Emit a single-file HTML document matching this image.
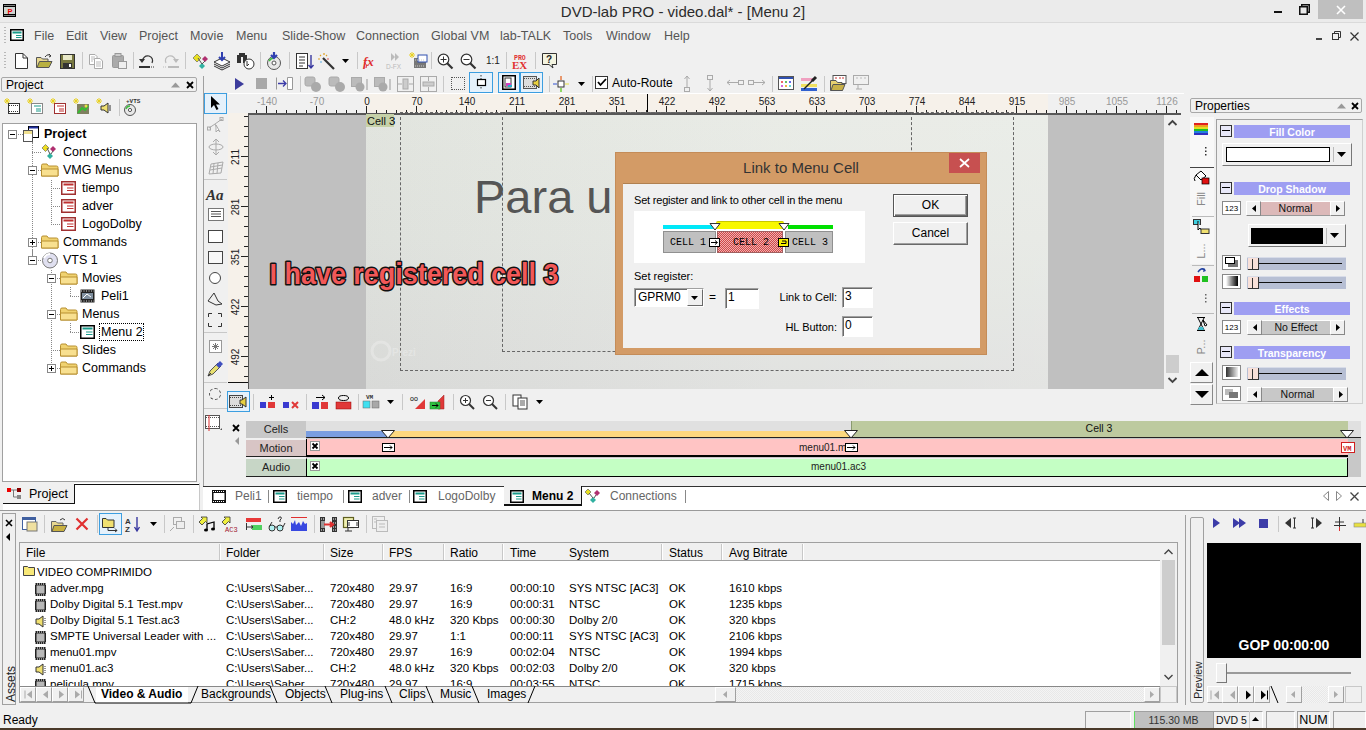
<!DOCTYPE html><html><head><meta charset="utf-8"><style>
*{margin:0;padding:0;box-sizing:border-box}
html,body{width:1366px;height:730px;overflow:hidden;background:#f0f0f0;font-family:"Liberation Sans",sans-serif;position:relative}
div{position:absolute}
.t{position:absolute;white-space:nowrap;line-height:1.15}
svg{position:absolute;overflow:visible}
</style></head><body>
<div style="position:absolute;left:0px;top:0px;width:1366px;height:22px;background:#ebebeb"></div>
<div style="position:absolute;left:0px;top:22px;width:1366px;height:1px;background:#dadada"></div>
<div class="t" style="left:432px;top:3px;font-size:15px;color:#2b2b2b;width:502px;text-align:center">DVD-lab PRO - video.dal* - [Menu 2]</div>
<svg style="left:3px;top:4px" width="13" height="13"><rect x="0" y="0" width="13" height="13" fill="#000"/><path d="M1.5 1.5H12M1.5 11.5H12" stroke="#fff" stroke-width="1" stroke-dasharray="1 1"/><rect x="1" y="3" width="11" height="7" fill="#d0d4d0"/><text x="4.5" y="9.5" font-size="7.5" font-family="Liberation Sans" font-weight="bold" fill="#e00">P</text></svg>
<div style="position:absolute;left:1274px;top:11px;width:8px;height:2px;background:#111"></div>
<svg style="left:1299px;top:4px" width="11" height="11"><rect x="0.75" y="2.75" width="7.5" height="7.5" fill="none" stroke="#111" stroke-width="1.5"/><path d="M2.75 2.5V0.75H10.25V8.25H8.5" fill="none" stroke="#111" stroke-width="1.5"/></svg>
<div style="position:absolute;left:1318px;top:0px;width:45px;height:19px;background:#bfbfbf"></div>
<svg style="left:1336px;top:5px" width="10" height="10"><path d="M1 1L9 9M9 1L1 9" stroke="#fff" stroke-width="1.6"/></svg>
<div style="position:absolute;left:0px;top:23px;width:1366px;height:25px;background:#f0f0f0"></div>
<div style="position:absolute;left:4px;top:27px;width:2px;height:16px;background:repeating-linear-gradient(#b8b8b8 0 1px,transparent 1px 3px)"></div>
<svg style="left:10px;top:29px" width="14" height="12"><rect x="0.75" y="0.75" width="12.5" height="10.5" fill="#fff" stroke="#000" stroke-width="1.5"/><rect x="2.5" y="2.5" width="9" height="2" fill="#1a9a8a"/><rect x="6" y="6" width="5.5" height="1" fill="#1a9a8a"/><rect x="6" y="8" width="5.5" height="1" fill="#1a9a8a"/></svg>
<div class="t" style="left:34px;top:29px;font-size:12.5px;color:#555;">File</div>
<div class="t" style="left:66px;top:29px;font-size:12.5px;color:#555;">Edit</div>
<div class="t" style="left:100px;top:29px;font-size:12.5px;color:#555;">View</div>
<div class="t" style="left:139px;top:29px;font-size:12.5px;color:#555;">Project</div>
<div class="t" style="left:190px;top:29px;font-size:12.5px;color:#555;">Movie</div>
<div class="t" style="left:236px;top:29px;font-size:12.5px;color:#555;">Menu</div>
<div class="t" style="left:282px;top:29px;font-size:12.5px;color:#555;">Slide-Show</div>
<div class="t" style="left:356px;top:29px;font-size:12.5px;color:#555;">Connection</div>
<div class="t" style="left:431px;top:29px;font-size:12.5px;color:#555;">Global VM</div>
<div class="t" style="left:500px;top:29px;font-size:12.5px;color:#555;">lab-TALK</div>
<div class="t" style="left:563px;top:29px;font-size:12.5px;color:#555;">Tools</div>
<div class="t" style="left:606px;top:29px;font-size:12.5px;color:#555;">Window</div>
<div class="t" style="left:664px;top:29px;font-size:12.5px;color:#555;">Help</div>
<div style="position:absolute;left:1316px;top:38px;width:6px;height:2px;background:#444"></div>
<svg style="left:1332px;top:31px" width="10" height="10"><rect x="0.5" y="2.5" width="6" height="6" fill="none" stroke="#333"/><path d="M2.5 2.5V0.5H8.5V6.5H6.5" fill="none" stroke="#333"/></svg>
<svg style="left:1350px;top:32px" width="9" height="9"><path d="M0.5 0.5L8.5 8.5M8.5 0.5L0.5 8.5" stroke="#333" stroke-width="1.2"/></svg>
<div style="position:absolute;left:4px;top:52px;width:2px;height:17px;background:repeating-linear-gradient(#b8b8b8 0 1px,transparent 1px 3px)"></div>
<div style="position:absolute;left:1px;top:77px;width:196px;height:15px;border:1px solid #a8a8a8;border-radius:2px;background:#f0f0f0"></div>
<div class="t" style="left:6px;top:79px;font-size:12px;color:#000;">Project</div>
<svg style="left:171px;top:82px" width="9" height="6"><path d="M0 5.5L4.5 0.5L9 5.5Z" fill="#999"/></svg>
<svg style="left:186px;top:81px" width="8" height="8"><path d="M1 1L7 7M7 1L1 7" stroke="#000" stroke-width="1.8"/></svg>
<div style="position:absolute;left:2px;top:123px;width:195px;height:359px;background:#fff;border:1px solid #a0a0a0"></div>
<div style="position:absolute;left:82px;top:52px;width:1px;height:17px;background:#c8c8c8"></div>
<div style="position:absolute;left:133px;top:52px;width:1px;height:17px;background:#c8c8c8"></div>
<div style="position:absolute;left:185px;top:52px;width:1px;height:17px;background:#c8c8c8"></div>
<div style="position:absolute;left:260px;top:52px;width:1px;height:17px;background:#c8c8c8"></div>
<div style="position:absolute;left:289px;top:52px;width:1px;height:17px;background:#c8c8c8"></div>
<div style="position:absolute;left:357px;top:52px;width:1px;height:17px;background:#c8c8c8"></div>
<div style="position:absolute;left:431px;top:52px;width:1px;height:17px;background:#c8c8c8"></div>
<div style="position:absolute;left:506px;top:52px;width:1px;height:17px;background:#c8c8c8"></div>
<div style="position:absolute;left:535px;top:52px;width:1px;height:17px;background:#c8c8c8"></div>
<svg style="left:15px;top:53px" width="13" height="16"><path d="M0.5 0.5H8L12.5 5V15.5H0.5Z" fill="#fff" stroke="#333"/><path d="M8 0.5V5H12.5" fill="none" stroke="#333"/></svg>
<svg style="left:36px;top:53px" width="17" height="15"><path d="M0.5 4.5H5L6.5 6H12V14.5H0.5Z" fill="#e8d890" stroke="#555"/><path d="M1 14.5L3.5 8.5H16L13 14.5Z" fill="#b8b040" stroke="#555"/><path d="M9 4Q12 0 15 3M13 1L15 3L13 4" stroke="#333" fill="none"/></svg>
<svg style="left:60px;top:54px" width="15" height="15"><rect x="0.5" y="0.5" width="14" height="14" fill="#787840" stroke="#333"/><rect x="3" y="1" width="9" height="5" fill="#e8e8c8"/><rect x="3" y="9" width="9" height="5" fill="#333"/><rect x="9" y="10" width="2" height="3" fill="#fff"/></svg>
<svg style="left:89px;top:54px" width="15" height="15"><path d="M0.5 0.5H6L8 2.5V10.5H0.5Z" fill="#fff" stroke="#aaa"/><path d="M5.5 4.5H11L13.5 7V14.5H5.5Z" fill="#fff" stroke="#aaa"/><path d="M7 8H12M7 10H12M7 12H12M2 3H6M2 5H6M2 7H4" stroke="#bbb"/></svg>
<svg style="left:112px;top:53px" width="15" height="16"><rect x="0.5" y="2.5" width="11" height="12" rx="1" fill="#aaa" stroke="#999"/><rect x="3" y="0.5" width="6" height="3" fill="#ccc" stroke="#999"/><rect x="6.5" y="8.5" width="8" height="7" fill="#eee" stroke="#999"/></svg>
<svg style="left:139px;top:54px" width="16" height="14"><path d="M3 7Q5 1 10 2Q15 4 13 9" stroke="#333" stroke-width="1.2" fill="none"/><path d="M0 5L3 9L6 5Z" fill="#333"/><rect x="0" y="12" width="11" height="2" fill="#333"/><path d="M12 13H16" stroke="#333" stroke-dasharray="1 1"/></svg>
<svg style="left:163px;top:54px" width="16" height="14"><path d="M13 7Q11 1 6 2Q1 4 3 9" stroke="#bbb" stroke-width="1.2" fill="none"/><path d="M16 5L13 9L10 5Z" fill="#bbb"/><rect x="5" y="12" width="11" height="2" fill="#bbb"/><path d="M0 13H4" stroke="#bbb" stroke-dasharray="1 1"/></svg>
<svg style="left:193px;top:53px" width="17" height="17"><path d="M0 5L4 1L8 5L4 9Z" fill="#e8e020" stroke="#555" stroke-width="0.6"/><path d="M9 6L12 3L15 6L12 9Z" fill="#b03070"/><path d="M6 13L9 10L12 13L9 16Z" fill="#30b0a0"/><path d="M5 5L9 11M12 8L9 11" stroke="#555"/></svg>
<svg style="left:213px;top:52px" width="19" height="18"><path d="M1 10L9 6L17 10L9 14Z" fill="#fff" stroke="#333"/><path d="M1 12L9 16L17 12M1 14L9 18L17 14" stroke="#333" fill="none"/><path d="M9 0V8M6 5L9 8L12 5" stroke="#3040b0" stroke-width="2" fill="none"/></svg>
<svg style="left:237px;top:53px" width="18" height="17"><rect x="0" y="2" width="4" height="8" fill="#333"/><rect x="6" y="2" width="4" height="8" fill="#333"/><rect x="2" y="0" width="6" height="4" fill="#333"/><circle cx="12" cy="11" r="5" fill="#fff" stroke="#333"/><path d="M10 8V13L12 11" stroke="#333" fill="none"/></svg>
<svg style="left:265px;top:52px" width="18" height="18"><circle cx="9" cy="11" r="6.5" fill="#e8e8e8" stroke="#555"/><circle cx="9" cy="11" r="2" fill="#fff" stroke="#555"/><path d="M4 9Q6 6 9 6" stroke="#40c040" stroke-width="1.5" fill="none"/><path d="M9 0V6M6 3L9 6L12 3" stroke="#3040b0" stroke-width="2.2" fill="none"/></svg>
<svg style="left:296px;top:53px" width="18" height="17"><rect x="0.5" y="0.5" width="11" height="15" fill="#fff" stroke="#333"/><path d="M3 4H9M3 7H9M3 10H9M3 13H7" stroke="#333"/><path d="M15 2V15M12.5 12L15 15L17.5 12" stroke="#3838a0" stroke-width="1.4" fill="none"/></svg>
<svg style="left:318px;top:53px" width="18" height="17"><path d="M5 5L16 16" stroke="#333" stroke-width="2.2"/><path d="M2 2L3 3M6 0V2M0 6H2M9 2L8 3" stroke="#e0a020" stroke-width="1.2"/><circle cx="3" cy="9" r="0.8" fill="#40a0e0"/><circle cx="10" cy="6" r="0.8" fill="#e04040"/></svg>
<svg style="left:342px;top:59px" width="7" height="4"><path d="M0 0H7L3.5 4Z" fill="#000"/></svg>
<svg style="left:363px;top:53px" width="17" height="16"><text x="0" y="13" font-size="13" font-family="Liberation Serif" font-style="italic" font-weight="bold" fill="#e03030">fx</text><path d="M1 9Q5 12 3 15" stroke="#e03030" fill="none"/></svg>
<svg style="left:385px;top:52px" width="20" height="18"><path d="M6 1L10 5L6 9ZM10 1L14 5L10 9Z" fill="#bbb"/><text x="1" y="17" font-size="6.5" font-family="Liberation Sans" fill="#bbb">D-FX</text></svg>
<svg style="left:409px;top:52px" width="19" height="18"><path d="M3 0V6M0 3H6M1 1L5 5M5 1L1 5" stroke="#e8d020"/><rect x="5" y="6" width="12" height="10" fill="#777"/><rect x="9" y="3" width="9" height="7" fill="#fff" stroke="#3050b0"/><path d="M6 8H16M6 14H16" stroke="#ccc" stroke-dasharray="1 1"/></svg>
<svg style="left:437px;top:53px" width="17" height="17"><circle cx="6.5" cy="6.5" r="5.3" fill="#fff" stroke="#333" stroke-width="1.2"/><path d="M10 10L15.5 15.5" stroke="#333" stroke-width="2.2"/><path d="M3.5 6.5H9.5M6.5 3.5V9.5" stroke="#333"/></svg>
<svg style="left:460px;top:53px" width="17" height="17"><circle cx="6.5" cy="6.5" r="5.3" fill="#fff" stroke="#333" stroke-width="1.2"/><path d="M10 10L15.5 15.5" stroke="#333" stroke-width="2.2"/><path d="M3.5 6.5H9.5" stroke="#333"/></svg>
<div class="t" style="left:486px;top:55px;font-size:10px;color:#222;">1:1</div>
<svg style="left:512px;top:53px" width="18" height="17"><text x="2" y="7" font-size="6.5" font-family="Liberation Mono" font-weight="bold" fill="#e03030">PRO</text><text x="0" y="16" font-size="11" font-family="Liberation Serif" font-weight="bold" fill="#e03030">EX</text></svg>
<svg style="left:542px;top:53px" width="16" height="17"><path d="M0.5 0.5H14.5V11.5H10L11 15L7 11.5H0.5Z" fill="#f4f4e0" stroke="#333"/><text x="4" y="10" font-size="10" font-family="Liberation Sans" font-weight="bold" fill="#222">?</text></svg>
<svg style="left:4px;top:98px" width="17" height="18"><path d="M3 0V6M0 3H6M1 1L5 5M5 1L1 5" stroke="#e8d020"/><rect x="4.5" y="5.5" width="11" height="10" fill="#fff" stroke="#333"/><path d="M5 7.5H15M5 13.5H15" stroke="#333" stroke-dasharray="1 1"/></svg>
<svg style="left:27px;top:98px" width="17" height="18"><path d="M3 0V6M0 3H6M1 1L5 5M5 1L1 5" stroke="#e8d020"/><rect x="4.5" y="5.5" width="11" height="10" fill="#fff" stroke="#888"/><path d="M7 8H14M9 11H14M9 13H14" stroke="#1a9a8a"/></svg>
<svg style="left:50px;top:98px" width="17" height="18"><path d="M3 0V6M0 3H6M1 1L5 5M5 1L1 5" stroke="#e8d020"/><rect x="4.5" y="5.5" width="11" height="10" fill="#fff" stroke="#a03030"/><path d="M7 8H14M9 11H14M9 13H14" stroke="#c03030"/></svg>
<svg style="left:73px;top:98px" width="17" height="18"><path d="M3 0V6M0 3H6M1 1L5 5M5 1L1 5" stroke="#e8d020"/><rect x="4" y="6" width="12" height="10" fill="#808060"/><path d="M5 15L9 10L12 12L15 8" stroke="#30c030" stroke-width="2" fill="none"/><circle cx="13" cy="8" r="1.5" fill="#e8e040"/></svg>
<svg style="left:96px;top:98px" width="17" height="18"><path d="M3 0V6M0 3H6M1 1L5 5M5 1L1 5" stroke="#e8d020"/><path d="M5 8H8L12 5V15L8 12H5Z" fill="#f0e070" stroke="#333"/><path d="M14 7V13" stroke="#333"/></svg>
<div style="position:absolute;left:119px;top:99px;width:1px;height:17px;background:#c8c8c8"></div>
<svg style="left:123px;top:97px" width="20" height="20"><text x="3" y="6" font-size="6" font-family="Liberation Mono" font-weight="bold" fill="#333">+VTS</text><circle cx="7" cy="13" r="5.5" fill="#e8e8e8" stroke="#555"/><circle cx="7" cy="13" r="1.6" fill="#fff" stroke="#555"/><path d="M3 12Q4 9 7 9" stroke="#40c040" stroke-width="1.3" fill="none"/></svg>
<svg style="left:0;top:0" width="200" height="400"><path d="M32.5 143V260M51.5 180V224M51.5 270V368M32.5 250V260" stroke="#888" stroke-dasharray="1 1"/><path d="M16.5 139V134" stroke="#888" stroke-dasharray="1 1"/><path d="M16 134.5H24" stroke="#888" stroke-dasharray="1 1"/><path d="M32 152.5H42" stroke="#888" stroke-dasharray="1 1"/><path d="M36 170.5H41" stroke="#888" stroke-dasharray="1 1"/><path d="M51 188.5H61" stroke="#888" stroke-dasharray="1 1"/><path d="M51 206.5H61" stroke="#888" stroke-dasharray="1 1"/><path d="M51 224.5H61" stroke="#888" stroke-dasharray="1 1"/><path d="M36 242.5H41" stroke="#888" stroke-dasharray="1 1"/><path d="M36 260.5H41" stroke="#888" stroke-dasharray="1 1"/><path d="M55 278.5H60" stroke="#888" stroke-dasharray="1 1"/><path d="M70 296.5H80" stroke="#888" stroke-dasharray="1 1"/><path d="M55 314.5H60" stroke="#888" stroke-dasharray="1 1"/><path d="M70 332.5H80" stroke="#888" stroke-dasharray="1 1"/><path d="M51 350.5H60" stroke="#888" stroke-dasharray="1 1"/><path d="M55 368.5H60" stroke="#888" stroke-dasharray="1 1"/><path d="M32.5 134V143M70.5 287V296M70.5 323V332" stroke="#888" stroke-dasharray="1 1"/></svg>
<svg style="left:8px;top:130px" width="9" height="9"><rect x="0.5" y="0.5" width="8" height="8" fill="#fff" stroke="#888"/><path d="M2 4.5H7" stroke="#000"/></svg>
<svg style="left:23px;top:126px" width="16" height="16"><rect x="5.5" y="0.5" width="10" height="11" fill="#fff" stroke="#000"/><rect x="6" y="0.5" width="9" height="2" fill="#2030a0"/><rect x="0.5" y="4.5" width="9" height="11" fill="#fff" stroke="#555"/><rect x="1" y="5" width="8" height="3" fill="#f0e090"/></svg>
<div class="t" style="left:44px;top:127px;font-size:12.5px;color:#000;"><b>Project</b></div>
<svg style="left:42px;top:144px" width="15" height="16"><path d="M0 4L3.5 0.5L7 4L3.5 7.5Z" fill="#f0e020" stroke="#555" stroke-width="0.6"/><path d="M8 5L11 2L14 5L11 8Z" fill="#b03070"/><path d="M5 12L8 9L11 12L8 15Z" fill="#30b0a0"/><path d="M5 4L8 10M11 7L9 10" stroke="#555"/></svg>
<div class="t" style="left:63px;top:145px;font-size:12.5px;color:#000;">Connections</div>
<svg style="left:28px;top:166px" width="9" height="9"><rect x="0.5" y="0.5" width="8" height="8" fill="#fff" stroke="#888"/><path d="M2 4.5H7" stroke="#000"/></svg>
<svg style="left:41px;top:163px" width="18" height="14"><path d="M0.5 2.5Q0.5 1 2 1H6L7.5 3H15.5Q17 3 17 4.5V13H0.5Z" fill="#f0d270" stroke="#b89030"/><path d="M0.5 13V6H17V13Z" fill="#f8e090" stroke="#b89030"/></svg>
<div class="t" style="left:63px;top:163px;font-size:12.5px;color:#000;">VMG Menus</div>
<svg style="left:61px;top:181px" width="15" height="14"><rect x="0.75" y="0.75" width="13.5" height="12.5" fill="#fff" stroke="#a03030" stroke-width="1.5"/><rect x="2.5" y="2.5" width="10" height="2" fill="#c03030"/><rect x="6" y="6.5" width="6.5" height="1" fill="#c03030"/><rect x="6" y="9" width="6.5" height="1" fill="#c03030"/></svg>
<div class="t" style="left:82px;top:181px;font-size:12.5px;color:#000;">tiempo</div>
<svg style="left:61px;top:199px" width="15" height="14"><rect x="0.75" y="0.75" width="13.5" height="12.5" fill="#fff" stroke="#a03030" stroke-width="1.5"/><rect x="2.5" y="2.5" width="10" height="2" fill="#c03030"/><rect x="6" y="6.5" width="6.5" height="1" fill="#c03030"/><rect x="6" y="9" width="6.5" height="1" fill="#c03030"/></svg>
<div class="t" style="left:82px;top:199px;font-size:12.5px;color:#000;">adver</div>
<svg style="left:61px;top:217px" width="15" height="14"><rect x="0.75" y="0.75" width="13.5" height="12.5" fill="#fff" stroke="#a03030" stroke-width="1.5"/><rect x="2.5" y="2.5" width="10" height="2" fill="#c03030"/><rect x="6" y="6.5" width="6.5" height="1" fill="#c03030"/><rect x="6" y="9" width="6.5" height="1" fill="#c03030"/></svg>
<div class="t" style="left:82px;top:217px;font-size:12.5px;color:#000;">LogoDolby</div>
<svg style="left:28px;top:238px" width="9" height="9"><rect x="0.5" y="0.5" width="8" height="8" fill="#fff" stroke="#888"/><path d="M2 4.5H7M4.5 2V7" stroke="#000"/></svg>
<svg style="left:41px;top:235px" width="18" height="14"><path d="M0.5 2.5Q0.5 1 2 1H6L7.5 3H15.5Q17 3 17 4.5V13H0.5Z" fill="#f0d270" stroke="#b89030"/><path d="M0.5 13V6H17V13Z" fill="#f8e090" stroke="#b89030"/></svg>
<div class="t" style="left:63px;top:235px;font-size:12.5px;color:#000;">Commands</div>
<svg style="left:28px;top:256px" width="9" height="9"><rect x="0.5" y="0.5" width="8" height="8" fill="#fff" stroke="#888"/><path d="M2 4.5H7" stroke="#000"/></svg>
<svg style="left:41px;top:252px" width="18" height="17"><circle cx="9" cy="8.5" r="7.5" fill="#e0e0f0" stroke="#777"/><circle cx="9" cy="8.5" r="2.3" fill="#fff" stroke="#777"/><path d="M3 6Q5 2 9 2" stroke="#fff" stroke-width="2" fill="none"/></svg>
<div class="t" style="left:63px;top:253px;font-size:12.5px;color:#000;">VTS 1</div>
<svg style="left:47px;top:274px" width="9" height="9"><rect x="0.5" y="0.5" width="8" height="8" fill="#fff" stroke="#888"/><path d="M2 4.5H7" stroke="#000"/></svg>
<svg style="left:60px;top:271px" width="18" height="14"><path d="M0.5 2.5Q0.5 1 2 1H6L7.5 3H15.5Q17 3 17 4.5V13H0.5Z" fill="#f0d270" stroke="#b89030"/><path d="M0.5 13V6H17V13Z" fill="#f8e090" stroke="#b89030"/></svg>
<div class="t" style="left:82px;top:271px;font-size:12.5px;color:#000;">Movies</div>
<svg style="left:80px;top:289px" width="15" height="14"><rect x="0.5" y="0.5" width="14" height="13" fill="#222"/><path d="M1 2H14M1 12H14" stroke="#ddd" stroke-dasharray="1 1.5"/><rect x="2" y="4" width="11" height="6" fill="#8090a0"/><path d="M3 9L7 5L11 8" stroke="#fff" fill="none"/></svg>
<div class="t" style="left:101px;top:289px;font-size:12.5px;color:#000;">Peli1</div>
<svg style="left:47px;top:310px" width="9" height="9"><rect x="0.5" y="0.5" width="8" height="8" fill="#fff" stroke="#888"/><path d="M2 4.5H7" stroke="#000"/></svg>
<svg style="left:60px;top:307px" width="18" height="14"><path d="M0.5 2.5Q0.5 1 2 1H6L7.5 3H15.5Q17 3 17 4.5V13H0.5Z" fill="#f0d270" stroke="#b89030"/><path d="M0.5 13V6H17V13Z" fill="#f8e090" stroke="#b89030"/></svg>
<div class="t" style="left:82px;top:307px;font-size:12.5px;color:#000;">Menus</div>
<svg style="left:80px;top:325px" width="15" height="14"><rect x="0.75" y="0.75" width="13.5" height="12.5" fill="#fff" stroke="#000" stroke-width="1.5"/><rect x="2.5" y="2.5" width="10" height="2" fill="#1a9a8a"/><rect x="6" y="6.5" width="6.5" height="1" fill="#1a9a8a"/><rect x="6" y="9" width="6.5" height="1" fill="#1a9a8a"/></svg>
<div style="position:absolute;left:99px;top:323px;width:45px;height:18px;border:1px dotted #000"></div>
<div class="t" style="left:101px;top:325px;font-size:12.5px;color:#000;">Menu 2</div>
<svg style="left:60px;top:343px" width="18" height="14"><path d="M0.5 2.5Q0.5 1 2 1H6L7.5 3H15.5Q17 3 17 4.5V13H0.5Z" fill="#f0d270" stroke="#b89030"/><path d="M0.5 13V6H17V13Z" fill="#f8e090" stroke="#b89030"/></svg>
<div class="t" style="left:82px;top:343px;font-size:12.5px;color:#000;">Slides</div>
<svg style="left:47px;top:364px" width="9" height="9"><rect x="0.5" y="0.5" width="8" height="8" fill="#fff" stroke="#888"/><path d="M2 4.5H7M4.5 2V7" stroke="#000"/></svg>
<svg style="left:60px;top:361px" width="18" height="14"><path d="M0.5 2.5Q0.5 1 2 1H6L7.5 3H15.5Q17 3 17 4.5V13H0.5Z" fill="#f0d270" stroke="#b89030"/><path d="M0.5 13V6H17V13Z" fill="#f8e090" stroke="#b89030"/></svg>
<div class="t" style="left:82px;top:361px;font-size:12.5px;color:#000;">Commands</div>
<div style="position:absolute;left:0px;top:483px;width:200px;height:27px;background:#fff"></div>
<div style="position:absolute;left:0px;top:483px;width:3px;height:27px;background:#f0f0f0"></div>
<div style="position:absolute;left:3px;top:483px;width:71px;height:20px;background:#f0f0f0"></div>
<div style="position:absolute;left:74px;top:484px;width:125px;height:1px;background:#111"></div>
<div style="position:absolute;left:74px;top:484px;width:1px;height:20px;background:#111"></div>
<div style="position:absolute;left:3px;top:503px;width:72px;height:1px;background:#111"></div>
<div style="position:absolute;left:199px;top:483px;width:1px;height:27px;background:#c8c8c8"></div>
<svg style="left:7px;top:488px" width="15" height="12"><rect x="0" y="0" width="4" height="4" fill="#e00"/><rect x="10" y="0" width="4" height="4" fill="#800"/><rect x="10" y="7" width="4" height="4" fill="#888"/><path d="M4 2H10M6.5 2V9H10" stroke="#777" fill="none"/></svg>
<div class="t" style="left:29px;top:487px;font-size:12.5px;color:#000;">Project</div>
<div style="position:absolute;left:203px;top:76px;width:1px;height:434px;background:#a0a0a0"></div>
<div style="position:absolute;left:204px;top:93px;width:23px;height:21px;background:#e5f1fb;border:1px solid #3c9ee0"></div>
<svg style="left:210px;top:96px" width="12" height="15"><path d="M1 0L1 12L4 9L6.5 14L8.5 13L6 8.5L10 8.5Z" fill="#000"/></svg>
<svg style="left:207px;top:117px" width="18" height="16"><path d="M2 11L8 7L15 2M8 7L11 13" stroke="#aaa" fill="none"/><rect x="13" y="0.5" width="3" height="3" fill="none" stroke="#aaa"/><rect x="0.5" y="10" width="3" height="3" fill="none" stroke="#aaa"/><path d="M9 8L9 15L11 13L13 15Z" fill="#fff" stroke="#aaa"/></svg>
<svg style="left:207px;top:139px" width="18" height="16"><ellipse cx="9" cy="8" rx="7" ry="3" fill="none" stroke="#aaa"/><path d="M9 1L9 15M6 3L9 0L12 3M6 13L9 16L12 13" stroke="#aaa" fill="none"/></svg>
<svg style="left:207px;top:160px" width="18" height="16"><path d="M2 14L4 4L16 2L14 13Z M3 10L15 8M3.5 7L15.5 5M7 3.5L6 14M11 3L10 13.5" stroke="#aaa" fill="none"/></svg>
<div style="position:absolute;left:204px;top:179px;width:23px;height:1px;background:#c8c8c8"></div>
<div class="t" style="left:206px;top:187px;font-size:15px;color:#333;font-family:'Liberation Serif',serif"><i><b>Aa</b></i></div>
<svg style="left:208px;top:208px" width="16" height="13"><rect x="0.5" y="0.5" width="15" height="12" fill="#fff" stroke="#777"/><path d="M3 3.5H13M3 6H13M3 8.5H13" stroke="#555"/></svg>
<div style="position:absolute;left:208px;top:230px;width:15px;height:13px;border:1px solid #444;background:#fff"></div>
<div style="position:absolute;left:208px;top:251px;width:15px;height:13px;border:1px solid #444;background:#f8f8f8"></div>
<div style="position:absolute;left:209px;top:272px;width:12px;height:12px;border:1px solid #444;border-radius:50%;background:#fff"></div>
<svg style="left:207px;top:291px" width="16" height="15"><path d="M1 10L7 2L11 10L15 13L9 14Z" fill="none" stroke="#333"/></svg>
<svg style="left:208px;top:313px" width="14" height="14"><path d="M0.5 4V0.5H4M10 0.5H13.5V4M13.5 10V13.5H10M4 13.5H0.5V10" fill="none" stroke="#333"/></svg>
<div style="position:absolute;left:204px;top:332px;width:23px;height:1px;background:#c8c8c8"></div>
<svg style="left:209px;top:340px" width="13" height="13"><rect x="0.5" y="0.5" width="12" height="12" fill="#fff" stroke="#999"/><path d="M6.5 3V10M3 6.5H10M4 4L9 9M9 4L4 9" stroke="#777"/></svg>
<svg style="left:207px;top:360px" width="17" height="17"><path d="M1 16L3 11L11 3L14 6L6 14Z" fill="#e8e070" stroke="#555"/><path d="M9 5L13 1L16 4L12 8Z" fill="#4050c0"/><path d="M1 16L4 13" stroke="#333"/></svg>
<div style="position:absolute;left:204px;top:382px;width:23px;height:1px;background:#c8c8c8"></div>
<div style="position:absolute;left:209px;top:388px;width:12px;height:12px;border:1px dashed #555;border-radius:50%"></div>
<svg style="left:235px;top:78px" width="10" height="12"><path d="M0 0L9 6L0 12Z" fill="#3c3c9c"/></svg>
<div style="position:absolute;left:256px;top:78px;width:11px;height:11px;background:#a8a8a8"></div>
<svg style="left:276px;top:77px" width="18" height="13"><path d="M0.5 0.5V12.5" stroke="#999"/><path d="M11.5 0.5H16.5V12.5H11.5Z" fill="#fff" stroke="#999"/><path d="M2 6.5H10M7 3.5L10 6.5L7 9.5" stroke="#3c3ca8" stroke-width="1.3" fill="none"/></svg>
<div style="position:absolute;left:300px;top:76px;width:1px;height:16px;background:#c8c8c8"></div>
<svg style="left:304px;top:76px" width="18" height="16"><rect x="1" y="1" width="10" height="9" rx="2" fill="#bbb" stroke="#aaa"/><circle cx="12" cy="11" r="5" fill="#aaa"/></svg>
<svg style="left:328px;top:76px" width="18" height="16"><rect x="1" y="1" width="10" height="9" rx="2" fill="#bbb" stroke="#aaa"/><circle cx="12" cy="11" r="5" fill="#aaa"/></svg>
<svg style="left:351px;top:76px" width="18" height="16"><rect x="0.5" y="1.5" width="10" height="9" fill="#bbb" stroke="#aaa"/><circle cx="9" cy="11" r="4.5" fill="#aaa"/><path d="M16 3V14" stroke="#999"/></svg>
<svg style="left:374px;top:76px" width="18" height="16"><rect x="0.5" y="1.5" width="10" height="9" fill="#bbb" stroke="#aaa"/><circle cx="9" cy="11" r="4.5" fill="#aaa"/><path d="M16 3V14" stroke="#999"/></svg>
<svg style="left:397px;top:76px" width="18" height="16"><rect x="0.5" y="0.5" width="16" height="15" fill="none" stroke="#aaa"/><rect x="6" y="3" width="5" height="10" fill="#ccc" stroke="#aaa"/><path d="M1 8H5M12 8H16" stroke="#aaa"/></svg>
<svg style="left:420px;top:76px" width="18" height="16"><rect x="0.5" y="0.5" width="16" height="15" fill="none" stroke="#aaa"/><rect x="3" y="6" width="11" height="4" fill="#ccc" stroke="#aaa"/><path d="M8.5 1V5M8.5 11V15" stroke="#aaa"/></svg>
<div style="position:absolute;left:443px;top:76px;width:1px;height:16px;background:#c8c8c8"></div>
<div style="position:absolute;left:451px;top:77px;width:14px;height:13px;border:1px dotted #555"></div>
<div style="position:absolute;left:469px;top:72px;width:24px;height:21px;background:#e5f1fb;border:1px solid #3c9ee0"></div>
<svg style="left:474px;top:75px" width="14" height="15"><path d="M7 0V15" stroke="#333" stroke-dasharray="1.5 1.5"/><rect x="3.5" y="4.5" width="8" height="6" fill="#fff" stroke="#000" stroke-width="1.2"/></svg>
<div style="position:absolute;left:498px;top:72px;width:22px;height:21px;background:#e5f1fb;border:1px solid #3c9ee0"></div>
<svg style="left:502px;top:75px" width="14" height="15"><rect x="0.75" y="0.75" width="12.5" height="13.5" fill="#fff" stroke="#000" stroke-width="1.5"/><rect x="3" y="3" width="6" height="9" fill="none" stroke="#333"/><rect x="4" y="8" width="5" height="3" fill="#d040c0"/><rect x="6" y="10" width="4" height="2" fill="#20b0d0"/></svg>
<div style="position:absolute;left:520px;top:72px;width:23px;height:21px;background:#e5f1fb;border:1px solid #3c9ee0"></div>
<svg style="left:523px;top:76px" width="18" height="14"><rect x="0.5" y="0.5" width="13" height="12" fill="#ddd" stroke="#555"/><path d="M1 2.5H13M1 10.5H13" stroke="#555" stroke-dasharray="1 1"/><path d="M10 5L13 5L16 2L16 12L13 9L10 9Z" fill="#e8d040" stroke="#333"/></svg>
<div style="position:absolute;left:549px;top:76px;width:1px;height:16px;background:#c8c8c8"></div>
<svg style="left:553px;top:76px" width="17" height="16"><rect x="5" y="5" width="6" height="6" fill="#fff" stroke="#333"/><path d="M8 0V4M8 12V16" stroke="#ee4"/><path d="M0 8H4" stroke="#3050d0"/><path d="M12 8H16" stroke="#e6e040"/><path d="M8 12V16" stroke="#30c030"/><path d="M8 0V4" stroke="#e04040"/></svg>
<svg style="left:578px;top:82px" width="7" height="4"><path d="M0 0H7L3.5 4Z" fill="#000"/></svg>
<div style="position:absolute;left:592px;top:76px;width:1px;height:16px;background:#c8c8c8"></div>
<div style="position:absolute;left:595px;top:76px;width:13px;height:13px;background:#fff;border:1px solid #333"></div>
<svg style="left:597px;top:78px" width="10" height="9"><path d="M1 4L3.5 7L9 1" stroke="#000" stroke-width="1.8" fill="none"/></svg>
<div class="t" style="left:612px;top:77px;font-size:12px;color:#000;">Auto-Route</div>
<svg style="left:683px;top:75px" width="8" height="17"><path d="M4 1V12M1.5 4L4 1L6.5 4" stroke="#aaa" fill="none"/><rect x="1.5" y="12.5" width="5" height="4" fill="none" stroke="#aaa"/></svg>
<svg style="left:706px;top:75px" width="8" height="17"><rect x="1.5" y="0.5" width="5" height="4" fill="none" stroke="#aaa"/><path d="M4 5V16M1.5 13L4 16L6.5 13" stroke="#aaa" fill="none"/></svg>
<svg style="left:726px;top:78px" width="18" height="9"><path d="M1 4.5H12M4 2L1 4.5L4 7" stroke="#aaa" fill="none"/><rect x="12.5" y="2.5" width="5" height="4" fill="none" stroke="#aaa"/></svg>
<svg style="left:748px;top:78px" width="18" height="9"><rect x="0.5" y="2.5" width="5" height="4" fill="none" stroke="#aaa"/><path d="M6 4.5H17M14 2L17 4.5L14 7" stroke="#aaa" fill="none"/></svg>
<div style="position:absolute;left:772px;top:76px;width:1px;height:16px;background:#c8c8c8"></div>
<svg style="left:778px;top:76px" width="16" height="14"><rect x="0.5" y="0.5" width="15" height="13" fill="#fff" stroke="#555"/><rect x="1" y="1" width="14" height="2" fill="#3050b0"/><circle cx="4" cy="6" r="1" fill="#e33"/><circle cx="8" cy="6" r="1" fill="#3a3"/><circle cx="12" cy="6" r="1" fill="#33e"/><circle cx="4" cy="10" r="1" fill="#c3c"/><circle cx="8" cy="10" r="1" fill="#e90"/><circle cx="12" cy="10" r="1" fill="#3cc"/></svg>
<svg style="left:801px;top:76px" width="17" height="16"><rect x="0" y="2" width="12" height="3" fill="#f0a0c0"/><rect x="0" y="8" width="16" height="3" fill="#f0e060"/><rect x="0" y="12" width="16" height="3" fill="#3060d0"/><path d="M3 13L12 4" stroke="#222" stroke-width="1.5"/><path d="M11 5L15 1" stroke="#222" stroke-width="3"/></svg>
<div style="position:absolute;left:824px;top:76px;width:1px;height:16px;background:#c8c8c8"></div>
<svg style="left:830px;top:75px" width="17" height="16"><rect x="3" y="0.5" width="13" height="8" fill="#fff" stroke="#555"/><path d="M5 3H7M9 3H11M12 3H14" stroke="#c33"/><path d="M0.5 5.5H6L7.5 7.5H12V15.5H0.5Z" fill="#e6d070" stroke="#555"/><path d="M1 15.5L3 9.5H15L12.5 15.5Z" fill="#c8b048" stroke="#555"/></svg>
<svg style="left:853px;top:75px" width="17" height="16"><rect x="0.5" y="0.5" width="15" height="9" fill="none" stroke="#aaa"/><path d="M3 3H5M7 3H9M11 3H13" stroke="#bbb"/><path d="M5 10V14M3 14H9" stroke="#aaa"/></svg>
<div style="position:absolute;left:228px;top:93px;width:956px;height:1px;background:#fff"></div>
<div style="position:absolute;left:228px;top:94px;width:956px;height:19px;background:#f0f0f0"></div>
<div style="position:absolute;left:366px;top:94px;width:682px;height:19px;background:#f6f1ea"></div>
<div style="position:absolute;left:228px;top:113px;width:20px;height:270px;background:#f6f1ea"></div>
<div style="position:absolute;left:228px;top:382px;width:20px;height:1px;background:#111"></div>
<svg style="left:228px;top:94px" width="952" height="19"><rect x="28" y="16" width="1" height="3" fill="#222"/><rect x="38" y="12" width="1" height="7" fill="#222"/><rect x="48" y="16" width="1" height="3" fill="#222"/><rect x="58" y="16" width="1" height="3" fill="#222"/><rect x="68" y="16" width="1" height="3" fill="#222"/><rect x="78" y="16" width="1" height="3" fill="#222"/><rect x="88" y="12" width="1" height="7" fill="#222"/><rect x="98" y="16" width="1" height="3" fill="#222"/><rect x="108" y="16" width="1" height="3" fill="#222"/><rect x="118" y="16" width="1" height="3" fill="#222"/><rect x="128" y="16" width="1" height="3" fill="#222"/><rect x="138" y="12" width="1" height="7" fill="#222"/><rect x="148" y="16" width="1" height="3" fill="#222"/><rect x="158" y="16" width="1" height="3" fill="#222"/><rect x="168" y="16" width="1" height="3" fill="#222"/><rect x="178" y="16" width="1" height="3" fill="#222"/><rect x="188" y="12" width="1" height="7" fill="#222"/><rect x="198" y="16" width="1" height="3" fill="#222"/><rect x="208" y="16" width="1" height="3" fill="#222"/><rect x="218" y="16" width="1" height="3" fill="#222"/><rect x="228" y="16" width="1" height="3" fill="#222"/><rect x="238" y="12" width="1" height="7" fill="#222"/><rect x="248" y="16" width="1" height="3" fill="#222"/><rect x="258" y="16" width="1" height="3" fill="#222"/><rect x="268" y="16" width="1" height="3" fill="#222"/><rect x="278" y="16" width="1" height="3" fill="#222"/><rect x="288" y="12" width="1" height="7" fill="#222"/><rect x="298" y="16" width="1" height="3" fill="#222"/><rect x="308" y="16" width="1" height="3" fill="#222"/><rect x="318" y="16" width="1" height="3" fill="#222"/><rect x="328" y="16" width="1" height="3" fill="#222"/><rect x="338" y="12" width="1" height="7" fill="#222"/><rect x="348" y="16" width="1" height="3" fill="#222"/><rect x="358" y="16" width="1" height="3" fill="#222"/><rect x="368" y="16" width="1" height="3" fill="#222"/><rect x="378" y="16" width="1" height="3" fill="#222"/><rect x="388" y="12" width="1" height="7" fill="#222"/><rect x="398" y="16" width="1" height="3" fill="#222"/><rect x="408" y="16" width="1" height="3" fill="#222"/><rect x="418" y="16" width="1" height="3" fill="#222"/><rect x="428" y="16" width="1" height="3" fill="#222"/><rect x="438" y="12" width="1" height="7" fill="#222"/><rect x="448" y="16" width="1" height="3" fill="#222"/><rect x="458" y="16" width="1" height="3" fill="#222"/><rect x="468" y="16" width="1" height="3" fill="#222"/><rect x="478" y="16" width="1" height="3" fill="#222"/><rect x="488" y="12" width="1" height="7" fill="#222"/><rect x="498" y="16" width="1" height="3" fill="#222"/><rect x="508" y="16" width="1" height="3" fill="#222"/><rect x="518" y="16" width="1" height="3" fill="#222"/><rect x="528" y="16" width="1" height="3" fill="#222"/><rect x="538" y="12" width="1" height="7" fill="#222"/><rect x="548" y="16" width="1" height="3" fill="#222"/><rect x="558" y="16" width="1" height="3" fill="#222"/><rect x="568" y="16" width="1" height="3" fill="#222"/><rect x="578" y="16" width="1" height="3" fill="#222"/><rect x="588" y="12" width="1" height="7" fill="#222"/><rect x="598" y="16" width="1" height="3" fill="#222"/><rect x="608" y="16" width="1" height="3" fill="#222"/><rect x="618" y="16" width="1" height="3" fill="#222"/><rect x="628" y="16" width="1" height="3" fill="#222"/><rect x="638" y="12" width="1" height="7" fill="#222"/><rect x="648" y="16" width="1" height="3" fill="#222"/><rect x="658" y="16" width="1" height="3" fill="#222"/><rect x="668" y="16" width="1" height="3" fill="#222"/><rect x="678" y="16" width="1" height="3" fill="#222"/><rect x="688" y="12" width="1" height="7" fill="#222"/><rect x="698" y="16" width="1" height="3" fill="#222"/><rect x="708" y="16" width="1" height="3" fill="#222"/><rect x="718" y="16" width="1" height="3" fill="#222"/><rect x="728" y="16" width="1" height="3" fill="#222"/><rect x="738" y="12" width="1" height="7" fill="#222"/><rect x="748" y="16" width="1" height="3" fill="#222"/><rect x="758" y="16" width="1" height="3" fill="#222"/><rect x="768" y="16" width="1" height="3" fill="#222"/><rect x="778" y="16" width="1" height="3" fill="#222"/><rect x="788" y="12" width="1" height="7" fill="#222"/><rect x="798" y="16" width="1" height="3" fill="#222"/><rect x="808" y="16" width="1" height="3" fill="#222"/><rect x="818" y="16" width="1" height="3" fill="#222"/><rect x="828" y="16" width="1" height="3" fill="#222"/><rect x="838" y="12" width="1" height="7" fill="#222"/><rect x="848" y="16" width="1" height="3" fill="#222"/><rect x="858" y="16" width="1" height="3" fill="#222"/><rect x="868" y="16" width="1" height="3" fill="#222"/><rect x="878" y="16" width="1" height="3" fill="#222"/><rect x="888" y="12" width="1" height="7" fill="#222"/><rect x="898" y="16" width="1" height="3" fill="#222"/><rect x="908" y="16" width="1" height="3" fill="#222"/><rect x="918" y="16" width="1" height="3" fill="#222"/><rect x="928" y="16" width="1" height="3" fill="#222"/><rect x="938" y="12" width="1" height="7" fill="#222"/><rect x="948" y="16" width="1" height="3" fill="#222"/></svg>
<div class="t" style="left:247px;top:96px;font-size:10px;color:#999;width:40px;text-align:center">-140</div>
<div class="t" style="left:297px;top:96px;font-size:10px;color:#999;width:40px;text-align:center">-70</div>
<div class="t" style="left:347px;top:96px;font-size:10px;color:#222;width:40px;text-align:center">0</div>
<div class="t" style="left:397px;top:96px;font-size:10px;color:#222;width:40px;text-align:center">70</div>
<div class="t" style="left:447px;top:96px;font-size:10px;color:#222;width:40px;text-align:center">140</div>
<div class="t" style="left:497px;top:96px;font-size:10px;color:#222;width:40px;text-align:center">211</div>
<div class="t" style="left:547px;top:96px;font-size:10px;color:#222;width:40px;text-align:center">281</div>
<div class="t" style="left:597px;top:96px;font-size:10px;color:#222;width:40px;text-align:center">351</div>
<div class="t" style="left:647px;top:96px;font-size:10px;color:#222;width:40px;text-align:center">422</div>
<div class="t" style="left:697px;top:96px;font-size:10px;color:#222;width:40px;text-align:center">492</div>
<div class="t" style="left:747px;top:96px;font-size:10px;color:#222;width:40px;text-align:center">563</div>
<div class="t" style="left:797px;top:96px;font-size:10px;color:#222;width:40px;text-align:center">633</div>
<div class="t" style="left:847px;top:96px;font-size:10px;color:#222;width:40px;text-align:center">703</div>
<div class="t" style="left:897px;top:96px;font-size:10px;color:#222;width:40px;text-align:center">774</div>
<div class="t" style="left:947px;top:96px;font-size:10px;color:#222;width:40px;text-align:center">844</div>
<div class="t" style="left:997px;top:96px;font-size:10px;color:#222;width:40px;text-align:center">915</div>
<div class="t" style="left:1047px;top:96px;font-size:10px;color:#999;width:40px;text-align:center">985</div>
<div class="t" style="left:1097px;top:96px;font-size:10px;color:#999;width:40px;text-align:center">1055</div>
<div class="t" style="left:1147px;top:96px;font-size:10px;color:#999;width:40px;text-align:center">1126</div>
<div style="position:absolute;left:647px;top:94px;width:1px;height:19px;background:#000"></div>
<svg style="left:228px;top:113px" width="20" height="270"><rect x="16" y="3" width="4" height="1" fill="#222"/><rect x="16" y="13" width="4" height="1" fill="#222"/><rect x="16" y="23" width="4" height="1" fill="#222"/><rect x="16" y="33" width="4" height="1" fill="#222"/><rect x="13" y="43" width="7" height="1" fill="#222"/><rect x="16" y="53" width="4" height="1" fill="#222"/><rect x="16" y="63" width="4" height="1" fill="#222"/><rect x="16" y="73" width="4" height="1" fill="#222"/><rect x="16" y="83" width="4" height="1" fill="#222"/><rect x="13" y="93" width="7" height="1" fill="#222"/><rect x="16" y="103" width="4" height="1" fill="#222"/><rect x="16" y="113" width="4" height="1" fill="#222"/><rect x="16" y="123" width="4" height="1" fill="#222"/><rect x="16" y="133" width="4" height="1" fill="#222"/><rect x="13" y="143" width="7" height="1" fill="#222"/><rect x="16" y="153" width="4" height="1" fill="#222"/><rect x="16" y="163" width="4" height="1" fill="#222"/><rect x="16" y="173" width="4" height="1" fill="#222"/><rect x="16" y="183" width="4" height="1" fill="#222"/><rect x="13" y="193" width="7" height="1" fill="#222"/><rect x="16" y="203" width="4" height="1" fill="#222"/><rect x="16" y="213" width="4" height="1" fill="#222"/><rect x="16" y="223" width="4" height="1" fill="#222"/><rect x="16" y="233" width="4" height="1" fill="#222"/><rect x="13" y="243" width="7" height="1" fill="#222"/><rect x="16" y="253" width="4" height="1" fill="#222"/><rect x="16" y="263" width="4" height="1" fill="#222"/></svg>
<div class="t" style="left:222px;top:150px;width:30px;height:14px;font-size:10px;color:#222;text-align:center;transform:rotate(-90deg)">211</div>
<div class="t" style="left:222px;top:200px;width:30px;height:14px;font-size:10px;color:#222;text-align:center;transform:rotate(-90deg)">281</div>
<div class="t" style="left:222px;top:250px;width:30px;height:14px;font-size:10px;color:#222;text-align:center;transform:rotate(-90deg)">351</div>
<div class="t" style="left:222px;top:300px;width:30px;height:14px;font-size:10px;color:#222;text-align:center;transform:rotate(-90deg)">422</div>
<div class="t" style="left:222px;top:350px;width:30px;height:14px;font-size:10px;color:#222;text-align:center;transform:rotate(-90deg)">492</div>
<div style="position:absolute;left:248px;top:113px;width:916px;height:276px;background:#c0c0c0"></div>
<div style="position:absolute;left:248px;top:113px;width:933px;height:2px;background:#585858"></div>
<div style="position:absolute;left:248px;top:113px;width:1px;height:276px;background:#585858"></div>
<div style="position:absolute;left:366px;top:115px;width:682px;height:274px;background:linear-gradient(180deg,#e6e9e3 0%,#e3e6e1 45%,#dddedc 100%)"></div>
<div style="position:absolute;left:366px;top:114px;width:28px;height:13px;background:#c6d1a8"></div>
<div class="t" style="left:367px;top:115px;font-size:11px;color:#111;">Cell 3</div>
<div style="position:absolute;left:366px;top:115px;width:682px;height:274px;background:linear-gradient(90deg,rgba(0,0,0,0.02),rgba(255,255,255,0.12) 60%,rgba(255,255,255,0.18))"></div>
<div style="position:absolute;left:400px;top:112px;width:614px;height:259px;border:1px dashed #666"></div>
<div style="position:absolute;left:502px;top:112px;width:410px;height:240px;border:1px dashed #666"></div>
<div style="position:absolute;left:366px;top:114px;width:28px;height:13px;background:#c6d1a8"></div>
<div class="t" style="left:367px;top:115px;font-size:11px;color:#111;">Cell 3</div>
<div class="t" style="left:474px;top:170px;font-size:47px;color:#555;">Para u</div>
<svg style="left:260px;top:250px" width="320" height="45"><text x="9.5" y="33.5" font-family="Liberation Sans" font-weight="bold" font-size="29" textLength="289" lengthAdjust="spacingAndGlyphs" fill="#f25858" stroke="#111" stroke-width="3" stroke-linejoin="round" paint-order="stroke">I have registered cell 3</text></svg>
<svg style="left:370px;top:340px" width="52" height="22" opacity="0.25"><circle cx="11" cy="11" r="9" fill="none" stroke="#fff" stroke-width="3"/><text x="22" y="16" font-size="10" font-family="Liberation Sans" font-weight="bold" fill="#fff">Prezi</text></svg>
<div style="position:absolute;left:1164px;top:115px;width:17px;height:274px;background:#f0f0f0"></div>
<svg style="left:1168px;top:120px" width="9" height="6"><path d="M0.5 5L4.5 1L8.5 5" stroke="#444" stroke-width="1.8" fill="none"/></svg>
<svg style="left:1168px;top:377px" width="9" height="6"><path d="M0.5 1L4.5 5L8.5 1" stroke="#444" stroke-width="1.8" fill="none"/></svg>
<div style="position:absolute;left:1166px;top:355px;width:13px;height:18px;background:#cdcdcd"></div>
<div style="position:absolute;left:615px;top:152px;width:372px;height:203px;background:#d39b66;border:1px solid #c48c58"></div>
<div style="position:absolute;left:623px;top:183px;width:357px;height:165px;background:#f0f0f0;border-top:1px solid #b08050"></div>
<div class="t" style="left:615px;top:159px;font-size:15px;color:#333;width:372px;text-align:center">Link to Menu Cell</div>
<div style="position:absolute;left:949px;top:153px;width:31px;height:20px;background:#c75050"></div>
<svg style="left:959px;top:158px" width="11" height="10"><path d="M1 1L10 9M10 1L1 9" stroke="#fff" stroke-width="1.7"/></svg>
<div class="t" style="left:634px;top:194px;font-size:11px;color:#000;letter-spacing:-0.2px">Set register and link to other cell in the menu</div>
<div style="position:absolute;left:634px;top:211px;width:231px;height:52px;background:#fff"></div>
<div style="position:absolute;left:663px;top:225px;width:53px;height:4px;background:#00e8f8"></div>
<div style="position:absolute;left:716px;top:221px;width:68px;height:8px;background:#f8f800;border-top:1px solid #c8c800;border-radius:2px 2px 0 0"></div>
<div style="position:absolute;left:788px;top:225px;width:45px;height:4px;background:#00e000"></div>
<div style="position:absolute;left:663px;top:231px;width:53px;height:22px;background:#c0c0c0;border:1px solid #909090"></div>
<div style="position:absolute;left:717px;top:231px;width:66px;height:22px;background:repeating-conic-gradient(#d04848 0 25%, #f0b0b0 0 50%) 0 0/2px 2px;border:1px solid #a06060"></div>
<div style="position:absolute;left:785px;top:231px;width:48px;height:22px;background:#c0c0c0;border:1px solid #909090"></div>
<div class="t" style="left:670px;top:237px;font-size:10px;font-family:'Liberation Mono',monospace;color:#000">CELL 1</div>
<div class="t" style="left:733px;top:237px;font-size:10px;font-family:'Liberation Mono',monospace;color:#000">CELL 2</div>
<div class="t" style="left:792px;top:237px;font-size:10px;font-family:'Liberation Mono',monospace;color:#000">CELL 3</div>
<div style="position:absolute;left:709px;top:238px;width:11px;height:9px;background:#fff;border:1px solid #000"></div>
<svg style="left:710px;top:239px" width="9" height="7"><path d="M1 3.5H7M5 1.5L7.5 3.5L5 5.5" stroke="#000" fill="none"/></svg>
<div style="position:absolute;left:778px;top:238px;width:11px;height:9px;background:#f8f000;border:1px solid #000"></div>
<svg style="left:779px;top:239px" width="9" height="7"><path d="M2 4.5H7V2H3" stroke="#000" fill="none"/></svg>
<svg style="left:709px;top:223px" width="12" height="8"><path d="M1 0.5H11L6 7Z" fill="#fff" stroke="#333"/></svg>
<svg style="left:778px;top:223px" width="12" height="8"><path d="M1 0.5H11L6 7Z" fill="#fff" stroke="#333"/></svg>
<div style="position:absolute;left:893px;top:194px;width:75px;height:23px;background:#f0f0f0;border:1px solid #555;box-shadow:inset 1px 1px 0 #fff, inset -1px -1px 0 #696969, inset -2px -2px 0 #a0a0a0"></div>
<div class="t" style="left:893px;top:199px;font-size:12px;color:#000;width:75px;text-align:center">OK</div>
<div style="position:absolute;left:893px;top:222px;width:75px;height:23px;background:#f0f0f0;border:1px solid;border-color:#fff #696969 #696969 #fff;box-shadow:inset -1px -1px 0 #a0a0a0"></div>
<div class="t" style="left:893px;top:227px;font-size:12px;color:#000;width:75px;text-align:center">Cancel</div>
<div class="t" style="left:634px;top:270px;font-size:11px;color:#000;">Set register:</div>
<div style="position:absolute;left:634px;top:288px;width:70px;height:19px;background:#fff;border:1px solid;border-color:#a0a0a0 #fff #fff #a0a0a0;box-shadow:inset 1px 1px 0 #696969"></div>
<div class="t" style="left:638px;top:291px;font-size:12px;color:#000;">GPRM0</div>
<div style="position:absolute;left:687px;top:289px;width:16px;height:17px;background:#f0f0f0;border:1px solid;border-color:#fff #696969 #696969 #fff"></div>
<svg style="left:691px;top:296px" width="8" height="4"><path d="M0 0H7L3.5 4Z" fill="#000"/></svg>
<div class="t" style="left:709px;top:291px;font-size:12px;color:#000;">=</div>
<div style="position:absolute;left:725px;top:288px;width:34px;height:21px;background:#fff;border:1px solid;border-color:#a0a0a0 #fff #fff #a0a0a0;box-shadow:inset 1px 1px 0 #696969"></div>
<div class="t" style="left:728px;top:291px;font-size:12px;color:#000;">1</div>
<div style="position:absolute;left:842px;top:287px;width:31px;height:21px;background:#fff;border:1px solid;border-color:#a0a0a0 #fff #fff #a0a0a0;box-shadow:inset 1px 1px 0 #696969"></div>
<div class="t" style="left:845px;top:290px;font-size:12px;color:#000;">3</div>
<div style="position:absolute;left:842px;top:316px;width:31px;height:21px;background:#fff;border:1px solid;border-color:#a0a0a0 #fff #fff #a0a0a0;box-shadow:inset 1px 1px 0 #696969"></div>
<div class="t" style="left:845px;top:319px;font-size:12px;color:#000;">0</div>
<div class="t" style="left:737px;top:291px;font-size:11px;color:#000;width:100px;text-align:right">Link to Cell:</div>
<div class="t" style="left:737px;top:321px;font-size:11px;color:#000;width:100px;text-align:right">HL Button:</div>
<div style="position:absolute;left:1190px;top:98px;width:172px;height:15px;border:1px solid #a8a8a8;border-radius:2px"></div>
<div class="t" style="left:1195px;top:100px;font-size:12px;color:#000;">Properties</div>
<svg style="left:1337px;top:103px" width="9" height="6"><path d="M0 5.5L4.5 0.5L9 5.5Z" fill="#999"/></svg>
<svg style="left:1351px;top:102px" width="8" height="8"><path d="M1 1L7 7M7 1L1 7" stroke="#000" stroke-width="1.8"/></svg>
<div style="position:absolute;left:1190px;top:117px;width:25px;height:243px;background:#f0f0f0"></div>
<div style="position:absolute;left:1190px;top:117px;width:24px;height:50px;background:#f8f8f8"></div>
<div style="position:absolute;left:1190px;top:167px;width:24px;height:1px;background:#444"></div>
<div style="position:absolute;left:1190px;top:168px;width:24px;height:96px;background:#f7f7f7"></div>
<div style="position:absolute;left:1192px;top:216px;width:22px;height:1px;background:#bbb"></div>
<div style="position:absolute;left:1192px;top:265px;width:22px;height:1px;background:#bbb"></div>
<div style="position:absolute;left:1192px;top:313px;width:22px;height:1px;background:#bbb"></div>
<svg style="left:1194px;top:123px" width="14" height="12"><rect y="0" width="14" height="2" fill="#e02020"/><rect y="2" width="14" height="2" fill="#f0a020"/><rect y="4" width="14" height="2" fill="#e0e020"/><rect y="6" width="14" height="2" fill="#20c020"/><rect y="8" width="14" height="2" fill="#2080e0"/><rect y="10" width="14" height="2" fill="#3030c0"/></svg>
<svg style="left:1205px;top:147px" width="2" height="9"><rect y="0" width="1.5" height="1.5" fill="#333"/><rect y="3.5" width="1.5" height="1.5" fill="#333"/><rect y="7" width="1.5" height="1.5" fill="#333"/></svg>
<svg style="left:1193px;top:170px" width="17" height="15"><path d="M3 5L8 1L13 6L8 10Z" fill="#fff" stroke="#000"/><path d="M3 5Q0 9 2 11" stroke="#000" fill="none"/><rect x="9" y="8" width="7" height="6" fill="#e01010" stroke="#000" stroke-width="0.7"/></svg>
<div class="t" style="left:1190px;top:192px;width:24px;height:14px;font-size:11px;color:#888;text-align:center;transform:rotate(-90deg)">Fill</div>
<svg style="left:1193px;top:219px" width="17" height="15"><rect x="0.5" y="0.5" width="7" height="5" fill="#40d0e0" stroke="#333"/><path d="M5 2L5 11L7 9L9 12" stroke="#000" fill="#fff"/><rect x="8" y="10" width="8" height="4.5" fill="#f0e070" stroke="#333"/></svg>
<div class="t" style="left:1190px;top:244px;width:24px;height:14px;font-size:11px;color:#888;text-align:center;transform:rotate(-90deg)">L...</div>
<svg style="left:1194px;top:267px" width="15" height="16"><path d="M4 5Q7 0 11 3" stroke="#2040a0" stroke-width="1.5" fill="none"/><path d="M10 1L12 4L9 5Z" fill="#2040a0"/><rect x="0" y="9" width="6" height="6" fill="#e01010"/><rect x="8" y="9" width="6" height="6" fill="#20c020"/></svg>
<svg style="left:1205px;top:294px" width="2" height="9"><rect y="0" width="1.5" height="1.5" fill="#666"/><rect y="3.5" width="1.5" height="1.5" fill="#666"/><rect y="7" width="1.5" height="1.5" fill="#666"/></svg>
<svg style="left:1195px;top:317px" width="15" height="14"><path d="M2 0.5H10M2 13.5H10M3 1L9 13M9 1L3 13" stroke="#000" fill="none"/><path d="M4 10H8L9 13H3Z" fill="#40c0d0"/><path d="M8 3L12 8L10 9Z" fill="#fff" stroke="#000"/></svg>
<div class="t" style="left:1190px;top:340px;width:24px;height:14px;font-size:11px;color:#888;text-align:center;transform:rotate(-90deg)">P...</div>
<div style="position:absolute;left:1190px;top:362px;width:23px;height:21px;background:#f0f0f0;border:1px solid;border-color:#fff #888 #888 #fff"></div>
<svg style="left:1195px;top:369px" width="14" height="7"><path d="M0 7L7 0L14 7Z" fill="#000"/></svg>
<div style="position:absolute;left:1190px;top:384px;width:23px;height:21px;background:#f0f0f0;border:1px solid;border-color:#fff #888 #888 #fff"></div>
<svg style="left:1195px;top:391px" width="14" height="7"><path d="M0 0L14 0L7 7Z" fill="#000"/></svg>
<div style="position:absolute;left:1216px;top:119px;width:147px;height:285px;border:1px solid #a0a0a0;border-right-color:#d0d0d0;border-bottom-color:#d0d0d0"></div>
<div style="position:absolute;left:1220px;top:125px;width:12px;height:12px;border:1px solid #333;background:#e8e8f8"></div>
<div style="position:absolute;left:1222px;top:130px;width:8px;height:1px;background:#000"></div>
<div style="position:absolute;left:1234px;top:125px;width:116px;height:13px;background:#9e9ef2"></div>
<div class="t" style="left:1234px;top:126px;font-size:10.5px;color:#fff;width:116px;text-align:center;font-weight:bold">Fill Color</div>
<div style="position:absolute;left:1220px;top:182px;width:12px;height:12px;border:1px solid #333;background:#e8e8f8"></div>
<div style="position:absolute;left:1222px;top:187px;width:8px;height:1px;background:#000"></div>
<div style="position:absolute;left:1234px;top:182px;width:116px;height:13px;background:#9e9ef2"></div>
<div class="t" style="left:1234px;top:183px;font-size:10.5px;color:#fff;width:116px;text-align:center;font-weight:bold">Drop Shadow</div>
<div style="position:absolute;left:1220px;top:302px;width:12px;height:12px;border:1px solid #333;background:#e8e8f8"></div>
<div style="position:absolute;left:1222px;top:307px;width:8px;height:1px;background:#000"></div>
<div style="position:absolute;left:1234px;top:302px;width:116px;height:13px;background:#9e9ef2"></div>
<div class="t" style="left:1234px;top:303px;font-size:10.5px;color:#fff;width:116px;text-align:center;font-weight:bold">Effects</div>
<div style="position:absolute;left:1220px;top:346px;width:12px;height:12px;border:1px solid #333;background:#e8e8f8"></div>
<div style="position:absolute;left:1222px;top:351px;width:8px;height:1px;background:#000"></div>
<div style="position:absolute;left:1234px;top:346px;width:116px;height:13px;background:#9e9ef2"></div>
<div class="t" style="left:1234px;top:347px;font-size:10.5px;color:#fff;width:116px;text-align:center;font-weight:bold">Transparency</div>
<div style="position:absolute;left:1222px;top:143px;width:130px;height:23px;background:#f0f0f0;border:1px solid;border-color:#fff #777 #777 #fff"></div>
<div style="position:absolute;left:1226px;top:147px;width:104px;height:15px;background:#fff;border:1px solid #000"></div>
<div style="position:absolute;left:1333px;top:147px;width:1px;height:15px;background:#bbb"></div>
<svg style="left:1337px;top:152px" width="9" height="5"><path d="M0 0H9L4.5 5Z" fill="#000"/></svg>
<div style="position:absolute;left:1222px;top:201px;width:19px;height:14px;background:#fff;border:1px solid #888"></div>
<div class="t" style="left:1222px;top:204px;font-size:8px;color:#000;width:19px;text-align:center">123</div>
<div style="position:absolute;left:1246px;top:201px;width:99px;height:15px;background:#dcb9b9;border-top:1px solid #fff;border-bottom:1px solid #999"></div>
<div style="position:absolute;left:1246px;top:201px;width:15px;height:15px;background:#f0f0f0;border:1px solid;border-color:#fff #888 #888 #fff"></div>
<div style="position:absolute;left:1330px;top:201px;width:15px;height:15px;background:#f0f0f0;border:1px solid;border-color:#fff #888 #888 #fff"></div>
<svg style="left:1252px;top:205px" width="4" height="7"><path d="M4 0V7L0 3.5Z" fill="#000"/></svg>
<svg style="left:1336px;top:205px" width="4" height="7"><path d="M0 0V7L4 3.5Z" fill="#000"/></svg>
<div class="t" style="left:1261px;top:202px;font-size:10.5px;color:#111;width:69px;text-align:center">Normal</div>
<div style="position:absolute;left:1248px;top:224px;width:98px;height:23px;background:#f0f0f0;border:1px solid;border-color:#fff #777 #777 #fff"></div>
<div style="position:absolute;left:1251px;top:228px;width:72px;height:16px;background:#000"></div>
<div style="position:absolute;left:1326px;top:228px;width:1px;height:16px;background:#bbb"></div>
<svg style="left:1330px;top:233px" width="9" height="5"><path d="M0 0H9L4.5 5Z" fill="#000"/></svg>
<div style="position:absolute;left:1222px;top:255px;width:19px;height:15px;background:#fff;border:1px solid #888"></div>
<svg style="left:1225px;top:257px" width="14" height="11"><rect x="3" y="3" width="10" height="7" fill="#777"/><rect x="0.5" y="0.5" width="9" height="6" fill="#fff" stroke="#000"/></svg>
<div style="position:absolute;left:1247px;top:257px;width:99px;height:13px;background:#b7bfd4;border-top:1px solid #d8dce8"></div>
<div style="position:absolute;left:1258px;top:263px;width:84px;height:1px;background:#111"></div>
<div style="position:absolute;left:1248px;top:258px;width:11px;height:12px;background:#f9e0d8;border-right:1px solid #333;border-bottom:1px solid #333"></div>
<div style="position:absolute;left:1252px;top:259px;width:1px;height:10px;background:#333"></div>
<div style="position:absolute;left:1222px;top:274px;width:19px;height:15px;background:#fff;border:1px solid #888"></div>
<svg style="left:1226px;top:276px" width="12" height="10"><defs><linearGradient id="gg"><stop offset="0" stop-color="#fff"/><stop offset="1" stop-color="#000"/></linearGradient></defs><rect width="12" height="10" fill="url(#gg)"/></svg>
<div style="position:absolute;left:1247px;top:276px;width:99px;height:13px;background:#b7bfd4;border-top:1px solid #d8dce8"></div>
<div style="position:absolute;left:1258px;top:282px;width:84px;height:1px;background:#111"></div>
<div style="position:absolute;left:1248px;top:277px;width:11px;height:12px;background:#f9e0d8;border-right:1px solid #333;border-bottom:1px solid #333"></div>
<div style="position:absolute;left:1252px;top:278px;width:1px;height:10px;background:#333"></div>
<div style="position:absolute;left:1222px;top:320px;width:19px;height:14px;background:#fff;border:1px solid #888"></div>
<div class="t" style="left:1222px;top:323px;font-size:8px;color:#000;width:19px;text-align:center">123</div>
<div style="position:absolute;left:1247px;top:320px;width:98px;height:15px;background:#c8c8c8;border-top:1px solid #fff;border-bottom:1px solid #999"></div>
<div style="position:absolute;left:1247px;top:320px;width:15px;height:15px;background:#f0f0f0;border:1px solid;border-color:#fff #888 #888 #fff"></div>
<div style="position:absolute;left:1330px;top:320px;width:15px;height:15px;background:#f0f0f0;border:1px solid;border-color:#fff #888 #888 #fff"></div>
<svg style="left:1253px;top:324px" width="4" height="7"><path d="M4 0V7L0 3.5Z" fill="#000"/></svg>
<svg style="left:1336px;top:324px" width="4" height="7"><path d="M0 0V7L4 3.5Z" fill="#000"/></svg>
<div class="t" style="left:1262px;top:321px;font-size:10.5px;color:#111;width:68px;text-align:center">No Effect</div>
<div style="position:absolute;left:1222px;top:365px;width:19px;height:15px;background:#fff;border:1px solid #888"></div>
<svg style="left:1226px;top:367px" width="12" height="10"><defs><linearGradient id="gh"><stop offset="0" stop-color="#333"/><stop offset="1" stop-color="#eee"/></linearGradient></defs><rect width="12" height="10" fill="url(#gh)"/></svg>
<div style="position:absolute;left:1247px;top:367px;width:99px;height:13px;background:#b7bfd4;border-top:1px solid #d8dce8"></div>
<div style="position:absolute;left:1258px;top:373px;width:84px;height:1px;background:#111"></div>
<div style="position:absolute;left:1248px;top:368px;width:11px;height:12px;background:#f9e0d8;border-right:1px solid #333;border-bottom:1px solid #333"></div>
<div style="position:absolute;left:1252px;top:369px;width:1px;height:10px;background:#333"></div>
<div style="position:absolute;left:1222px;top:386px;width:19px;height:15px;background:#fff;border:1px solid #888"></div>
<svg style="left:1225px;top:389px" width="13" height="9"><rect x="0" y="0" width="8" height="6" fill="#bbb"/><rect x="4" y="3" width="9" height="6" fill="#777"/></svg>
<div style="position:absolute;left:1247px;top:387px;width:101px;height:15px;background:#c8c8c8;border-top:1px solid #fff;border-bottom:1px solid #999"></div>
<div style="position:absolute;left:1247px;top:387px;width:15px;height:15px;background:#f0f0f0;border:1px solid;border-color:#fff #888 #888 #fff"></div>
<div style="position:absolute;left:1333px;top:387px;width:15px;height:15px;background:#f0f0f0;border:1px solid;border-color:#fff #888 #888 #fff"></div>
<svg style="left:1253px;top:391px" width="4" height="7"><path d="M4 0V7L0 3.5Z" fill="#000"/></svg>
<svg style="left:1339px;top:391px" width="4" height="7"><path d="M0 0V7L4 3.5Z" fill="#000"/></svg>
<div class="t" style="left:1262px;top:388px;font-size:10.5px;color:#111;width:71px;text-align:center">Normal</div>
<div style="position:absolute;left:204px;top:408px;width:24px;height:1px;background:#c8c8c8"></div>
<div style="position:absolute;left:227px;top:391px;width:23px;height:21px;background:#e5f1fb;border:1px solid #3c9ee0"></div>
<svg style="left:229px;top:394px" width="19" height="15"><rect x="0.5" y="1.5" width="13" height="12" fill="#ddd" stroke="#444"/><path d="M1 3.5H13M1 11.5H13" stroke="#444" stroke-dasharray="1 1"/><path d="M11 6H13L17 3V13L13 10H11Z" fill="#e8d040" stroke="#333"/></svg>
<div style="position:absolute;left:253px;top:394px;width:1px;height:16px;background:#c8c8c8"></div>
<div style="position:absolute;left:306px;top:394px;width:1px;height:16px;background:#c8c8c8"></div>
<div style="position:absolute;left:358px;top:394px;width:1px;height:16px;background:#c8c8c8"></div>
<div style="position:absolute;left:402px;top:394px;width:1px;height:16px;background:#c8c8c8"></div>
<div style="position:absolute;left:453px;top:394px;width:1px;height:16px;background:#c8c8c8"></div>
<div style="position:absolute;left:505px;top:394px;width:1px;height:16px;background:#c8c8c8"></div>
<svg style="left:260px;top:394px" width="16" height="16"><rect x="0" y="8" width="6" height="6" fill="#3a3ad0"/><rect x="8" y="8" width="7" height="6" fill="#e03838"/><path d="M11.5 1V6M9 3.5H14" stroke="#000"/></svg>
<svg style="left:283px;top:394px" width="17" height="16"><rect x="0" y="8" width="6" height="6" fill="#3a3ad0"/><path d="M9 8L15 14M15 8L9 14" stroke="#e03838" stroke-width="2"/></svg>
<svg style="left:312px;top:394px" width="17" height="16"><rect x="0" y="8" width="7" height="7" fill="#3a3ad0"/><rect x="9" y="8" width="7" height="7" fill="#e03838"/><path d="M4 3.5H13M10 1L13 3.5L10 6" stroke="#000" fill="none"/></svg>
<svg style="left:335px;top:394px" width="17" height="16"><rect x="1" y="8" width="15" height="7" fill="#e03838" stroke="#900" stroke-width="0.5"/><ellipse cx="8.5" cy="4" rx="5" ry="2.5" fill="none" stroke="#000"/></svg>
<svg style="left:363px;top:394px" width="18" height="16"><rect x="0" y="7" width="7" height="7" fill="#40e0f0" stroke="#666" stroke-width="0.5"/><rect x="9" y="7" width="7" height="7" fill="#a8a8a8" stroke="#666" stroke-width="0.5"/><text x="3" y="5" font-size="6" font-family="Liberation Mono" font-weight="bold" fill="#333">VM</text></svg>
<svg style="left:387px;top:400px" width="7" height="4"><path d="M0 0H7L3.5 4Z" fill="#000"/></svg>
<svg style="left:410px;top:394px" width="17" height="16"><path d="M15 5V15H5Z" fill="#e03838"/><text x="0" y="7" font-size="7" fill="#000" font-family="Liberation Sans">oo</text></svg>
<svg style="left:429px;top:394px" width="17" height="16"><path d="M15 1V15H9V7Z" fill="#e03838" stroke="#a02020" stroke-width="0.5"/><rect x="1" y="8" width="10" height="7" fill="#30c040" stroke="#208030" stroke-width="0.5"/><path d="M3 11.5H9M7 9.5L9 11.5L7 13.5" stroke="#000" fill="none"/></svg>
<svg style="left:459px;top:394px" width="17" height="17"><circle cx="6.5" cy="6.5" r="5" fill="#fff" stroke="#333" stroke-width="1.2"/><path d="M10 10L15 15" stroke="#333" stroke-width="2"/><path d="M4 6.5H9M6.5 4V9" stroke="#333"/></svg>
<svg style="left:482px;top:394px" width="17" height="17"><circle cx="6.5" cy="6.5" r="5" fill="#fff" stroke="#333" stroke-width="1.2"/><path d="M10 10L15 15" stroke="#333" stroke-width="2"/><path d="M4 6.5H9" stroke="#333"/></svg>
<svg style="left:512px;top:394px" width="17" height="16"><rect x="1" y="1" width="8" height="11" fill="#fff" stroke="#333"/><rect x="6" y="4" width="9" height="11" fill="#fff" stroke="#333"/><path d="M8 7H13M8 9H13M8 11H13" stroke="#555"/></svg>
<svg style="left:536px;top:400px" width="7" height="4"><path d="M0 0H7L3.5 4Z" fill="#000"/></svg>
<svg style="left:205px;top:415px" width="19" height="19"><rect x="0.5" y="0.5" width="14" height="13" fill="#fff" stroke="#555"/><path d="M1 2.5H14M1 11.5H14" stroke="#555" stroke-dasharray="1 1"/><path d="M4 0V16" stroke="#e03030"/><path d="M15 15L17 13V15Z" fill="#555"/></svg>
<svg style="left:232px;top:424px" width="8" height="8"><path d="M1 1L7 7M7 1L1 7" stroke="#000" stroke-width="1.8"/></svg>
<svg style="left:235px;top:437px" width="4" height="8"><path d="M4 0V8L0 4Z" fill="#999"/></svg>
<div style="position:absolute;left:246px;top:421px;width:60px;height:17px;background:#c8c8c8"></div>
<div class="t" style="left:246px;top:423px;font-size:11px;color:#222;width:60px;text-align:center">Cells</div>
<div style="position:absolute;left:246px;top:439px;width:60px;height:18px;background:#d8c5c5;border-top:1px solid #f0f0f0;border-bottom:1px solid #222"></div>
<div class="t" style="left:246px;top:442px;font-size:11px;color:#222;width:60px;text-align:center">Motion</div>
<div style="position:absolute;left:246px;top:458px;width:60px;height:19px;background:#c7d6c6;border-top:1px solid #f0f0f0;border-bottom:1px solid #222"></div>
<div class="t" style="left:246px;top:461px;font-size:11px;color:#222;width:60px;text-align:center">Audio</div>
<div style="position:absolute;left:306px;top:421px;width:1055px;height:17px;background:#e0e0e0"></div>
<div style="position:absolute;left:306px;top:431px;width:82px;height:7px;background:#7a9ee0"></div>
<div style="position:absolute;left:388px;top:431px;width:463px;height:7px;background:#fcd87e"></div>
<div style="position:absolute;left:851px;top:421px;width:497px;height:17px;background:#bdca9f"></div>
<div style="position:absolute;left:851px;top:421px;width:1px;height:17px;background:#8a9a70"></div>
<div class="t" style="left:1049px;top:422px;font-size:10.5px;color:#111;width:100px;text-align:center">Cell 3</div>
<div style="position:absolute;left:306px;top:437px;width:1055px;height:1px;background:#222"></div>
<svg style="left:381px;top:430px" width="14" height="9"><path d="M0.5 0.5H13.5L7 8Z" fill="#fff" stroke="#222"/></svg>
<svg style="left:844px;top:430px" width="14" height="9"><path d="M0.5 0.5H13.5L7 8Z" fill="#fff" stroke="#222"/></svg>
<svg style="left:1340px;top:430px" width="14" height="9"><path d="M0.5 0.5H13.5L7 8Z" fill="#fff" stroke="#222"/></svg>
<div style="position:absolute;left:306px;top:438px;width:1055px;height:19px;background:#c8c8c8"></div>
<div style="position:absolute;left:306px;top:439px;width:1042px;height:17px;background:#ffc4c4;border-left:1px solid #000;border-bottom:1px solid #000"></div>
<div style="position:absolute;left:306px;top:456px;width:1042px;height:1px;background:#000"></div>
<div style="position:absolute;left:310px;top:441px;width:10px;height:10px;background:#fff;border:1px solid #999"></div>
<svg style="left:312px;top:443px" width="6" height="6"><path d="M0.5 0.5L5.5 5.5M5.5 0.5L0.5 5.5" stroke="#000" stroke-width="1.8"/></svg>
<div class="t" style="left:799px;top:442px;font-size:10px;color:#222;">menu01.m</div>
<div style="position:absolute;left:382px;top:443px;width:13px;height:9px;background:#fff;border:1px solid #000"></div>
<svg style="left:384px;top:445px" width="9" height="5"><path d="M0 2.5H8M6 0.5L8 2.5L6 4.5" stroke="#000" fill="none"/></svg>
<div style="position:absolute;left:845px;top:443px;width:13px;height:9px;background:#fff;border:1px solid #000"></div>
<svg style="left:847px;top:445px" width="9" height="5"><path d="M0 2.5H8M6 0.5L8 2.5L6 4.5" stroke="#000" fill="none"/></svg>
<div style="position:absolute;left:1341px;top:442px;width:14px;height:11px;background:#fff;border:1px solid #d02020"></div>
<svg style="left:1343px;top:444px" width="10" height="7"><text x="0" y="6.5" font-size="7" font-family="Liberation Mono" font-weight="bold" fill="#d02020">VM</text></svg>
<div style="position:absolute;left:306px;top:457px;width:1055px;height:20px;background:#c8c8c8"></div>
<div style="position:absolute;left:306px;top:458px;width:1041px;height:18px;background:#c4ffc4;border-left:1px solid #000;border-top:1px solid #f0f0f0"></div>
<div style="position:absolute;left:306px;top:476px;width:1042px;height:1px;background:#000"></div>
<div style="position:absolute;left:1347px;top:458px;width:1px;height:19px;background:#000"></div>
<div style="position:absolute;left:310px;top:461px;width:10px;height:10px;background:#fff;border:1px solid #999"></div>
<svg style="left:312px;top:463px" width="6" height="6"><path d="M0.5 0.5L5.5 5.5M5.5 0.5L0.5 5.5" stroke="#000" stroke-width="1.8"/></svg>
<div class="t" style="left:811px;top:461px;font-size:10px;color:#222;">menu01.ac3</div>
<div style="position:absolute;left:203px;top:486px;width:1163px;height:1px;background:#333"></div>
<div style="position:absolute;left:203px;top:487px;width:1163px;height:23px;background:#fff"></div>
<div style="position:absolute;left:203px;top:510px;width:1163px;height:1px;background:#9a9a9a"></div>
<svg style="left:212px;top:490px" width="14" height="13"><rect x="0" y="0" width="14" height="13" fill="#111"/><path d="M1 1.5H13M1 11.5H13" stroke="#fff" stroke-dasharray="1 1"/><rect x="1.5" y="3" width="11" height="7" fill="#fff"/></svg>
<div class="t" style="left:235px;top:490px;font-size:12px;color:#666;">Peli1</div>
<div style="position:absolute;left:268px;top:490px;width:1px;height:13px;background:#888"></div>
<svg style="left:273px;top:490px" width="14" height="13"><rect x="0.75" y="0.75" width="12.5" height="11.5" fill="#fff" stroke="#000" stroke-width="1.5"/><rect x="2.5" y="2.5" width="9" height="2" fill="#1a9a8a"/><rect x="6" y="6" width="5.5" height="1" fill="#1a9a8a"/><rect x="6" y="8.5" width="5.5" height="1" fill="#1a9a8a"/></svg>
<div class="t" style="left:297px;top:490px;font-size:12px;color:#666;">tiempo</div>
<div style="position:absolute;left:343px;top:490px;width:1px;height:13px;background:#888"></div>
<svg style="left:348px;top:490px" width="14" height="13"><rect x="0.75" y="0.75" width="12.5" height="11.5" fill="#fff" stroke="#000" stroke-width="1.5"/><rect x="2.5" y="2.5" width="9" height="2" fill="#1a9a8a"/><rect x="6" y="6" width="5.5" height="1" fill="#1a9a8a"/><rect x="6" y="8.5" width="5.5" height="1" fill="#1a9a8a"/></svg>
<div class="t" style="left:372px;top:490px;font-size:12px;color:#666;">adver</div>
<div style="position:absolute;left:409px;top:490px;width:1px;height:13px;background:#888"></div>
<svg style="left:413px;top:490px" width="14" height="13"><rect x="0.75" y="0.75" width="12.5" height="11.5" fill="#fff" stroke="#000" stroke-width="1.5"/><rect x="2.5" y="2.5" width="9" height="2" fill="#1a9a8a"/><rect x="6" y="6" width="5.5" height="1" fill="#1a9a8a"/><rect x="6" y="8.5" width="5.5" height="1" fill="#1a9a8a"/></svg>
<div class="t" style="left:438px;top:490px;font-size:12px;color:#666;">LogoDolby</div>
<div style="position:absolute;left:504px;top:486px;width:78px;height:20px;background:#f0f0f0;border-right:1px solid #111;border-bottom:2px solid #111"></div>
<svg style="left:510px;top:490px" width="14" height="13"><rect x="0.75" y="0.75" width="12.5" height="11.5" fill="#fff" stroke="#000" stroke-width="1.5"/><rect x="2.5" y="2.5" width="9" height="2" fill="#1a9a8a"/><rect x="6" y="6" width="5.5" height="1" fill="#1a9a8a"/><rect x="6" y="8.5" width="5.5" height="1" fill="#1a9a8a"/></svg>
<div class="t" style="left:532px;top:490px;font-size:12px;color:#000;"><b>Menu 2</b></div>
<svg style="left:585px;top:489px" width="15" height="15"><path d="M0 3L3 0L6 3L3 6Z" fill="#e8e020" stroke="#555" stroke-width="0.6"/><path d="M9 4L12 1L15 4L12 7Z" fill="#b03070"/><path d="M5 11L8 8L11 11L8 14Z" fill="#30b0a0"/><path d="M4 4L8 9M11 6L9 9" stroke="#555"/></svg>
<div class="t" style="left:610px;top:490px;font-size:12px;color:#666;">Connections</div>
<div style="position:absolute;left:685px;top:490px;width:1px;height:13px;background:#888"></div>
<svg style="left:1323px;top:491px" width="6" height="10"><path d="M5.5 0.5V9.5L0.5 5Z" fill="none" stroke="#888"/></svg>
<svg style="left:1336px;top:491px" width="6" height="10"><path d="M0.5 0.5V9.5L5.5 5Z" fill="none" stroke="#888"/></svg>
<svg style="left:1350px;top:492px" width="9" height="9"><path d="M0.5 0.5L8.5 8.5M8.5 0.5L0.5 8.5" stroke="#444" stroke-width="1.3"/></svg>
<div style="position:absolute;left:0px;top:510px;width:203px;height:1px;background:#9a9a9a"></div>
<div style="position:absolute;left:2px;top:513px;width:14px;height:192px;background:#f0f0f0;border:1px solid #a0a0a0"></div>
<svg style="left:5px;top:519px" width="8" height="8"><path d="M1 1L7 7M7 1L1 7" stroke="#000" stroke-width="1.6"/></svg>
<svg style="left:6px;top:533px" width="4" height="8"><path d="M4 0V8L0 4Z" fill="#000"/></svg>
<div class="t" style="left:-8px;top:677px;width:40px;height:14px;font-size:12px;color:#222;text-align:center;transform:rotate(-90deg)">Assets</div>
<div style="position:absolute;left:44px;top:515px;width:1px;height:18px;background:#c8c8c8"></div>
<div style="position:absolute;left:97px;top:515px;width:1px;height:18px;background:#c8c8c8"></div>
<div style="position:absolute;left:164px;top:515px;width:1px;height:18px;background:#c8c8c8"></div>
<div style="position:absolute;left:193px;top:515px;width:1px;height:18px;background:#c8c8c8"></div>
<div style="position:absolute;left:314px;top:515px;width:1px;height:18px;background:#c8c8c8"></div>
<div style="position:absolute;left:366px;top:515px;width:1px;height:18px;background:#c8c8c8"></div>
<svg style="left:22px;top:517px" width="17" height="16"><rect x="0.5" y="0.5" width="13" height="12" fill="#fff" stroke="#4060a0"/><rect x="1" y="1" width="12" height="2" fill="#4060a0"/><rect x="5" y="5" width="10" height="9" fill="#f0e0a0" stroke="#777"/></svg>
<svg style="left:51px;top:517px" width="17" height="15"><path d="M0.5 4.5H5L6.5 6H12V14.5H0.5Z" fill="#e8d890" stroke="#666"/><path d="M1 14.5L3 8.5H16L13 14.5Z" fill="#c8b040" stroke="#555"/><path d="M9 3Q12 0 14 3" stroke="#333" fill="none"/></svg>
<svg style="left:75px;top:517px" width="14" height="14"><path d="M1.5 1.5L12.5 12.5M12.5 1.5L1.5 12.5" stroke="#e03030" stroke-width="2.2"/></svg>
<div style="position:absolute;left:99px;top:513px;width:23px;height:22px;background:#e5f1fb;border:1px solid #3c9ee0"></div>
<svg style="left:102px;top:516px" width="17" height="16"><path d="M0.5 2.5H4L5.5 4H12V11.5H0.5Z" fill="#f0e070" stroke="#333"/><path d="M6 11V14.5H15M13 12.5L15 14.5L13 16" stroke="#333" fill="none"/></svg>
<svg style="left:125px;top:516px" width="17" height="17"><text x="0" y="8" font-size="8" font-family="Liberation Sans" font-weight="bold" fill="#333">A</text><text x="0" y="16" font-size="8" font-family="Liberation Sans" font-weight="bold" fill="#333">Z</text><path d="M12 1V14M9.5 11L12 15L14.5 11" stroke="#3838a0" stroke-width="1.4" fill="none"/></svg>
<svg style="left:150px;top:522px" width="7" height="4"><path d="M0 0H7L3.5 4Z" fill="#000"/></svg>
<svg style="left:169px;top:517px" width="17" height="15"><rect x="4.5" y="0.5" width="8" height="7" fill="none" stroke="#aaa"/><rect x="7.5" y="4.5" width="8" height="7" fill="#eee" stroke="#aaa"/><path d="M1 14L5 10" stroke="#aaa"/></svg>
<svg style="left:198px;top:516px" width="19" height="17"><path d="M9 1H3L4.5 2.5L1 6L4 9L7.5 5.5L9 7Z" fill="#f0f040" stroke="#333" stroke-width="0.8"/><path d="M9 14V8L16 6V13" stroke="#000" stroke-width="1.3" fill="none"/><ellipse cx="8" cy="14" rx="2" ry="1.6" fill="#000"/><ellipse cx="15" cy="13" rx="2" ry="1.6" fill="#000"/></svg>
<svg style="left:221px;top:516px" width="20" height="17"><path d="M9 1H3L4.5 2.5L1 6L4 9L7.5 5.5L9 7Z" fill="#f0f040" stroke="#333" stroke-width="0.8"/><text x="4" y="16" font-size="7" font-family="Liberation Mono" fill="#a02030">AC3</text></svg>
<svg style="left:246px;top:518px" width="17" height="14"><rect x="0" y="0" width="15" height="4" fill="#e83838"/><rect x="6" y="7" width="10" height="5" fill="#50d060"/><path d="M0.5 5V12M1 9H7M5 7.5L7 9L5 10.5" stroke="#333" fill="none"/></svg>
<svg style="left:268px;top:516px" width="18" height="17"><circle cx="4" cy="12" r="3" fill="#b0f0f0" stroke="#333"/><circle cx="12" cy="12" r="3" fill="#b0f0f0" stroke="#333"/><path d="M7 11H9M1 11L4 6M15 11L17 7M10 3Q11 0 13 1Q14 3 12 4V6" stroke="#333" fill="none"/></svg>
<svg style="left:291px;top:516px" width="17" height="16"><rect x="0" y="1" width="16" height="1" fill="#e03030"/><path d="M0 15V6L2 8L4 4L5 9L8 6L10 10L12 5L14 8L16 7V15Z" fill="#3848e0"/></svg>
<svg style="left:320px;top:517px" width="17" height="15"><rect x="0" y="0" width="5" height="15" fill="#333"/><rect x="12" y="0" width="5" height="15" fill="#333"/><path d="M1 2H4M1 6H4M1 10H4M1 13H4M13 2H16M13 6H16M13 10H16M13 13H16" stroke="#fff" stroke-dasharray="1 1"/><rect x="1" y="4" width="4" height="7" fill="#999"/><path d="M4 7.5H13M10 5L13 7.5L10 10" stroke="#e03030" stroke-width="2.2" fill="none"/></svg>
<svg style="left:343px;top:516px" width="17" height="17"><rect x="0.5" y="1.5" width="10" height="10" fill="#f0f0b0" stroke="#606020" stroke-width="1.2"/><rect x="4.5" y="4.5" width="11" height="7" fill="#fff" stroke="#333"/><path d="M6 6V10M14 6V10" stroke="#333"/><path d="M5 11V15M2 15H9" stroke="#333"/></svg>
<svg style="left:372px;top:516px" width="17" height="16"><rect x="0.5" y="0.5" width="12" height="12" fill="none" stroke="#bbb"/><rect x="4.5" y="4.5" width="11" height="11" fill="#eee" stroke="#bbb"/><path d="M2 3H5M2 6H5M7 8H13M7 11H13" stroke="#bbb"/></svg>
<div style="position:absolute;left:19px;top:542px;width:1159px;height:144px;background:#fff;border:1px solid #a0a0a0;border-bottom:none"></div>
<div style="position:absolute;left:20px;top:543px;width:1140px;height:18px;background:#f0f0f0;border-bottom:1px solid #a0a0a0"></div>
<div style="position:absolute;left:219px;top:544px;width:1px;height:16px;background:#c8c8c8"></div>
<div style="position:absolute;left:220px;top:544px;width:1px;height:16px;background:#fff"></div>
<div style="position:absolute;left:323px;top:544px;width:1px;height:16px;background:#c8c8c8"></div>
<div style="position:absolute;left:324px;top:544px;width:1px;height:16px;background:#fff"></div>
<div style="position:absolute;left:382px;top:544px;width:1px;height:16px;background:#c8c8c8"></div>
<div style="position:absolute;left:383px;top:544px;width:1px;height:16px;background:#fff"></div>
<div style="position:absolute;left:443px;top:544px;width:1px;height:16px;background:#c8c8c8"></div>
<div style="position:absolute;left:444px;top:544px;width:1px;height:16px;background:#fff"></div>
<div style="position:absolute;left:502px;top:544px;width:1px;height:16px;background:#c8c8c8"></div>
<div style="position:absolute;left:503px;top:544px;width:1px;height:16px;background:#fff"></div>
<div style="position:absolute;left:661px;top:544px;width:1px;height:16px;background:#c8c8c8"></div>
<div style="position:absolute;left:662px;top:544px;width:1px;height:16px;background:#fff"></div>
<div style="position:absolute;left:721px;top:544px;width:1px;height:16px;background:#c8c8c8"></div>
<div style="position:absolute;left:722px;top:544px;width:1px;height:16px;background:#fff"></div>
<div style="position:absolute;left:802px;top:544px;width:1px;height:16px;background:#c8c8c8"></div>
<div style="position:absolute;left:803px;top:544px;width:1px;height:16px;background:#fff"></div>
<div class="t" style="left:26px;top:547px;font-size:12px;color:#000;">File</div>
<div class="t" style="left:226px;top:547px;font-size:12px;color:#000;">Folder</div>
<div class="t" style="left:330px;top:547px;font-size:12px;color:#000;">Size</div>
<div class="t" style="left:389px;top:547px;font-size:12px;color:#000;">FPS</div>
<div class="t" style="left:450px;top:547px;font-size:12px;color:#000;">Ratio</div>
<div class="t" style="left:510px;top:547px;font-size:12px;color:#000;">Time</div>
<div class="t" style="left:569px;top:547px;font-size:12px;color:#000;">System</div>
<div class="t" style="left:669px;top:547px;font-size:12px;color:#000;">Status</div>
<div class="t" style="left:729px;top:547px;font-size:12px;color:#000;">Avg Bitrate</div>
<svg style="left:23px;top:565px" width="12" height="11"><path d="M0.5 1.5H4.5L5.5 2.5H11.5V10.5H0.5Z" fill="#f8e878" stroke="#444"/></svg>
<div class="t" style="left:37px;top:566px;font-size:11.5px;color:#000;">VIDEO COMPRIMIDO</div>
<div style="left:20px;top:562px;width:1140px;height:124px;overflow:hidden">
<svg style="left:15px;top:21px" width="12" height="13"><rect x="0" y="0" width="11" height="13" fill="#222"/><path d="M0 1H11M0 12H11" stroke="#fff" stroke-dasharray="1 1"/><rect x="1.5" y="2.5" width="8" height="8" fill="#b8b8b8"/></svg>
<div class="t" style="left:30px;top:20px;font-size:11.5px;color:#000">adver.mpg</div>
<div class="t" style="left:206px;top:20px;font-size:11.5px;color:#000">C:\Users\Saber...</div>
<div class="t" style="left:310px;top:20px;font-size:11.5px;color:#000">720x480</div>
<div class="t" style="left:369px;top:20px;font-size:11.5px;color:#000">29.97</div>
<div class="t" style="left:430px;top:20px;font-size:11.5px;color:#000">16:9</div>
<div class="t" style="left:490px;top:20px;font-size:11.5px;color:#000">00:00:10</div>
<div class="t" style="left:549px;top:20px;font-size:11.5px;color:#000">SYS NTSC [AC3]</div>
<div class="t" style="left:649px;top:20px;font-size:11.5px;color:#000">OK</div>
<div class="t" style="left:709px;top:20px;font-size:11.5px;color:#000">1610 kbps</div>
<svg style="left:15px;top:37px" width="12" height="13"><rect x="0" y="0" width="11" height="13" fill="#222"/><path d="M0 1H11M0 12H11" stroke="#fff" stroke-dasharray="1 1"/><rect x="1.5" y="2.5" width="8" height="8" fill="#b8b8b8"/></svg>
<div class="t" style="left:30px;top:36px;font-size:11.5px;color:#000">Dolby Digital 5.1 Test.mpv</div>
<div class="t" style="left:206px;top:36px;font-size:11.5px;color:#000">C:\Users\Saber...</div>
<div class="t" style="left:310px;top:36px;font-size:11.5px;color:#000">720x480</div>
<div class="t" style="left:369px;top:36px;font-size:11.5px;color:#000">29.97</div>
<div class="t" style="left:430px;top:36px;font-size:11.5px;color:#000">16:9</div>
<div class="t" style="left:490px;top:36px;font-size:11.5px;color:#000">00:00:31</div>
<div class="t" style="left:549px;top:36px;font-size:11.5px;color:#000">NTSC</div>
<div class="t" style="left:649px;top:36px;font-size:11.5px;color:#000">OK</div>
<div class="t" style="left:709px;top:36px;font-size:11.5px;color:#000">1235 kbps</div>
<svg style="left:15px;top:53px" width="12" height="13"><path d="M1 4H4L8 1V12L4 9H1Z" fill="#f0e070" stroke="#333"/><path d="M10 3V10" stroke="#333" stroke-dasharray="1 1"/></svg>
<div class="t" style="left:30px;top:52px;font-size:11.5px;color:#000">Dolby Digital 5.1 Test.ac3</div>
<div class="t" style="left:206px;top:52px;font-size:11.5px;color:#000">C:\Users\Saber...</div>
<div class="t" style="left:310px;top:52px;font-size:11.5px;color:#000">CH:2</div>
<div class="t" style="left:369px;top:52px;font-size:11.5px;color:#000">48.0 kHz</div>
<div class="t" style="left:430px;top:52px;font-size:11.5px;color:#000">320 Kbps</div>
<div class="t" style="left:490px;top:52px;font-size:11.5px;color:#000">00:00:30</div>
<div class="t" style="left:549px;top:52px;font-size:11.5px;color:#000">Dolby 2/0</div>
<div class="t" style="left:649px;top:52px;font-size:11.5px;color:#000">OK</div>
<div class="t" style="left:709px;top:52px;font-size:11.5px;color:#000">320 kbps</div>
<svg style="left:15px;top:69px" width="12" height="13"><rect x="0" y="0" width="11" height="13" fill="#222"/><path d="M0 1H11M0 12H11" stroke="#fff" stroke-dasharray="1 1"/><rect x="1.5" y="2.5" width="8" height="8" fill="#b8b8b8"/></svg>
<div class="t" style="left:30px;top:68px;font-size:11.5px;color:#000">SMPTE Universal Leader with ...</div>
<div class="t" style="left:206px;top:68px;font-size:11.5px;color:#000">C:\Users\Saber...</div>
<div class="t" style="left:310px;top:68px;font-size:11.5px;color:#000">720x480</div>
<div class="t" style="left:369px;top:68px;font-size:11.5px;color:#000">29.97</div>
<div class="t" style="left:430px;top:68px;font-size:11.5px;color:#000">1:1</div>
<div class="t" style="left:490px;top:68px;font-size:11.5px;color:#000">00:00:11</div>
<div class="t" style="left:549px;top:68px;font-size:11.5px;color:#000">SYS NTSC [AC3]</div>
<div class="t" style="left:649px;top:68px;font-size:11.5px;color:#000">OK</div>
<div class="t" style="left:709px;top:68px;font-size:11.5px;color:#000">2106 kbps</div>
<svg style="left:15px;top:85px" width="12" height="13"><rect x="0" y="0" width="11" height="13" fill="#222"/><path d="M0 1H11M0 12H11" stroke="#fff" stroke-dasharray="1 1"/><rect x="1.5" y="2.5" width="8" height="8" fill="#b8b8b8"/></svg>
<div class="t" style="left:30px;top:84px;font-size:11.5px;color:#000">menu01.mpv</div>
<div class="t" style="left:206px;top:84px;font-size:11.5px;color:#000">C:\Users\Saber...</div>
<div class="t" style="left:310px;top:84px;font-size:11.5px;color:#000">720x480</div>
<div class="t" style="left:369px;top:84px;font-size:11.5px;color:#000">29.97</div>
<div class="t" style="left:430px;top:84px;font-size:11.5px;color:#000">16:9</div>
<div class="t" style="left:490px;top:84px;font-size:11.5px;color:#000">00:02:04</div>
<div class="t" style="left:549px;top:84px;font-size:11.5px;color:#000">NTSC</div>
<div class="t" style="left:649px;top:84px;font-size:11.5px;color:#000">OK</div>
<div class="t" style="left:709px;top:84px;font-size:11.5px;color:#000">1994 kbps</div>
<svg style="left:15px;top:101px" width="12" height="13"><path d="M1 4H4L8 1V12L4 9H1Z" fill="#f0e070" stroke="#333"/><path d="M10 3V10" stroke="#333" stroke-dasharray="1 1"/></svg>
<div class="t" style="left:30px;top:100px;font-size:11.5px;color:#000">menu01.ac3</div>
<div class="t" style="left:206px;top:100px;font-size:11.5px;color:#000">C:\Users\Saber...</div>
<div class="t" style="left:310px;top:100px;font-size:11.5px;color:#000">CH:2</div>
<div class="t" style="left:369px;top:100px;font-size:11.5px;color:#000">48.0 kHz</div>
<div class="t" style="left:430px;top:100px;font-size:11.5px;color:#000">320 Kbps</div>
<div class="t" style="left:490px;top:100px;font-size:11.5px;color:#000">00:02:03</div>
<div class="t" style="left:549px;top:100px;font-size:11.5px;color:#000">Dolby 2/0</div>
<div class="t" style="left:649px;top:100px;font-size:11.5px;color:#000">OK</div>
<div class="t" style="left:709px;top:100px;font-size:11.5px;color:#000">320 kbps</div>
<svg style="left:15px;top:117px" width="12" height="13"><rect x="0" y="0" width="11" height="13" fill="#222"/><path d="M0 1H11M0 12H11" stroke="#fff" stroke-dasharray="1 1"/><rect x="1.5" y="2.5" width="8" height="8" fill="#b8b8b8"/></svg>
<div class="t" style="left:30px;top:116px;font-size:11.5px;color:#000">pelicula.mpv</div>
<div class="t" style="left:206px;top:116px;font-size:11.5px;color:#000">C:\Users\Saber...</div>
<div class="t" style="left:310px;top:116px;font-size:11.5px;color:#000">720x480</div>
<div class="t" style="left:369px;top:116px;font-size:11.5px;color:#000">29.97</div>
<div class="t" style="left:430px;top:116px;font-size:11.5px;color:#000">16:9</div>
<div class="t" style="left:490px;top:116px;font-size:11.5px;color:#000">00:03:55</div>
<div class="t" style="left:549px;top:116px;font-size:11.5px;color:#000">NTSC</div>
<div class="t" style="left:649px;top:116px;font-size:11.5px;color:#000">OK</div>
<div class="t" style="left:709px;top:116px;font-size:11.5px;color:#000">1715 kbps</div>
</div>
<div style="position:absolute;left:1160px;top:543px;width:17px;height:143px;background:#f0f0f0"></div>
<div style="position:absolute;left:1162px;top:560px;width:13px;height:85px;background:#cdcdcd"></div>
<svg style="left:1164px;top:549px" width="9" height="6"><path d="M0.5 5L4.5 1L8.5 5" stroke="#444" stroke-width="1.4" fill="none"/></svg>
<svg style="left:1164px;top:674px" width="9" height="6"><path d="M0.5 1L4.5 5L8.5 1" stroke="#444" stroke-width="1.4" fill="none"/></svg>
<div style="position:absolute;left:19px;top:686px;width:1159px;height:17px;background:#f0f0f0;border:1px solid #a0a0a0;border-top:none"></div>
<div style="position:absolute;left:20px;top:686px;width:1140px;height:1px;background:#888"></div>
<div style="position:absolute;left:20px;top:687px;width:16px;height:15px;background:#f0f0f0;border:1px solid;border-color:#fff #a0a0a0 #a0a0a0 #fff"></div>
<div style="position:absolute;left:36px;top:687px;width:16px;height:15px;background:#f0f0f0;border:1px solid;border-color:#fff #a0a0a0 #a0a0a0 #fff"></div>
<div style="position:absolute;left:52px;top:687px;width:16px;height:15px;background:#f0f0f0;border:1px solid;border-color:#fff #a0a0a0 #a0a0a0 #fff"></div>
<div style="position:absolute;left:68px;top:687px;width:16px;height:15px;background:#f0f0f0;border:1px solid;border-color:#fff #a0a0a0 #a0a0a0 #fff"></div>
<svg style="left:24px;top:690px" width="60" height="9"><path d="M1 0.5V8.5" stroke="#aaa"/><path d="M8 0.5V8.5L3 4.5Z" fill="#aaa"/><path d="M24 0.5V8.5L19 4.5Z" fill="#aaa"/><path d="M35 0.5V8.5L40 4.5Z" fill="#aaa"/><path d="M51 0.5V8.5L56 4.5Z" fill="#aaa"/><path d="M57.5 0.5V8.5" stroke="#aaa"/></svg>
<div style="position:absolute;left:96px;top:687px;width:92px;height:16px;background:#fff"></div>
<svg style="left:0;top:686px" width="560" height="18"><path d="M88 0L95 17M191 17L198 0M270 0L277 17M325 0L332 17M385 0L392 17M426 0L433 17M472 0L479 17M528 17L535 0" stroke="#000" fill="none"/><path d="M95 17H191M198 17" stroke="#000"/></svg>
<div class="t" style="left:101px;top:688px;font-size:12px;color:#000;"><b>Video &amp; Audio</b></div>
<div class="t" style="left:201px;top:688px;font-size:12px;color:#000;">Backgrounds</div>
<div class="t" style="left:285px;top:688px;font-size:12px;color:#000;">Objects</div>
<div class="t" style="left:340px;top:688px;font-size:12px;color:#000;">Plug-ins</div>
<div class="t" style="left:399px;top:688px;font-size:12px;color:#000;">Clips</div>
<div class="t" style="left:440px;top:688px;font-size:12px;color:#000;">Music</div>
<div class="t" style="left:487px;top:688px;font-size:12px;color:#000;">Images</div>
<div style="position:absolute;left:736px;top:687px;width:408px;height:15px;background:repeating-conic-gradient(#e8e8e8 0 25%, #f4f4f4 0 50%) 0 0/2px 2px"></div>
<div style="position:absolute;left:715px;top:687px;width:21px;height:15px;background:#f0f0f0;border:1px solid;border-color:#fff #a0a0a0 #a0a0a0 #fff"></div>
<svg style="left:723px;top:691px" width="4" height="7"><path d="M4 0V7L0 3.5Z" fill="#aaa"/></svg>
<div style="position:absolute;left:1144px;top:687px;width:16px;height:15px;background:#f0f0f0;border:1px solid;border-color:#fff #a0a0a0 #a0a0a0 #fff"></div>
<svg style="left:1150px;top:691px" width="4" height="7"><path d="M0 0V7L4 3.5Z" fill="#aaa"/></svg>
<div style="position:absolute;left:1160px;top:686px;width:17px;height:17px;background:#f0f0f0;border:1px solid #c8c8c8"></div>
<div style="position:absolute;left:1185px;top:515px;width:1px;height:190px;background:#a0a0a0"></div>
<div style="position:absolute;left:1190px;top:517px;width:14px;height:186px;background:#f0f0f0;border:1px solid #a0a0a0;border-radius:2px"></div>
<div class="t" style="left:1178px;top:673px;width:42px;height:14px;font-size:10.5px;color:#222;text-align:center;transform:rotate(-90deg)">Preview</div>
<svg style="left:1213px;top:518px" width="8" height="10"><path d="M0 0L7 5L0 10Z" fill="#3c3ca8"/></svg>
<svg style="left:1233px;top:518px" width="14" height="10"><path d="M0 0L7 5L0 10Z M6 0L13 5L6 10Z" fill="#3c3ca8"/></svg>
<div style="position:absolute;left:1259px;top:519px;width:9px;height:9px;background:#3c3ca8"></div>
<div style="position:absolute;left:1278px;top:516px;width:1px;height:16px;background:#c8c8c8"></div>
<svg style="left:1285px;top:517px" width="12" height="12"><path d="M6 1L0 6L6 11Z" fill="#333"/><path d="M8 1H11M9.5 1V11M8 11H11" stroke="#333"/></svg>
<svg style="left:1310px;top:517px" width="12" height="12"><path d="M1 1H4M2.5 1V11M1 11H4" stroke="#333"/><path d="M6 1L12 6L6 11Z" fill="#333"/></svg>
<svg style="left:1333px;top:516px" width="14" height="15"><path d="M6.5 1V11M2 6H11M1 9.5H13" stroke="#333"/><path d="M6.5 11V15" stroke="#e03030"/></svg>
<svg style="left:1354px;top:519px" width="12" height="10"><rect x="0" y="4" width="12" height="4" fill="#e8e040" stroke="#888" stroke-width="0.6"/><path d="M9 0V4" stroke="#333"/></svg>
<div style="position:absolute;left:1207px;top:543px;width:154px;height:115px;background:#000"></div>
<div class="t" style="left:1207px;top:637px;font-size:14px;color:#fff;width:154px;text-align:center"><b>GOP 00:00:00</b></div>
<div style="position:absolute;left:1207px;top:658px;width:154px;height:28px;background:#f0f0f0"></div>
<div style="position:absolute;left:1226px;top:672px;width:125px;height:2px;background:#9a9a9a"></div>
<div style="position:absolute;left:1216px;top:663px;width:11px;height:20px;background:#f0f0f0;border:1px solid;border-color:#fff #777 #777 #fff"></div>
<div style="position:absolute;left:1207px;top:686px;width:16px;height:17px;background:#f0f0f0;border:1px solid;border-color:#fff #a0a0a0 #a0a0a0 #fff"></div>
<div style="position:absolute;left:1222px;top:686px;width:16px;height:17px;background:#f0f0f0;border:1px solid;border-color:#fff #a0a0a0 #a0a0a0 #fff"></div>
<div style="position:absolute;left:1238px;top:686px;width:16px;height:17px;background:#f0f0f0;border:1px solid;border-color:#fff #a0a0a0 #a0a0a0 #fff"></div>
<div style="position:absolute;left:1254px;top:686px;width:16px;height:17px;background:#f0f0f0;border:1px solid;border-color:#fff #a0a0a0 #a0a0a0 #fff"></div>
<svg style="left:1210px;top:690px" width="60" height="10"><path d="M1 0.5V9.5" stroke="#aaa"/><path d="M9 0.5V9.5L4 5Z" fill="#aaa"/><path d="M25 0.5V9.5L20 5Z" fill="#aaa"/><path d="M36 0.5V9.5L41 5Z" fill="#000"/><path d="M51 0.5V9.5L56 5Z" fill="#000"/><path d="M57.5 0.5V9.5" stroke="#000"/></svg>
<svg style="left:1270px;top:686px" width="16" height="18"><path d="M1 0L8 17" stroke="#000"/></svg>
<div style="position:absolute;left:1286px;top:686px;width:16px;height:17px;background:#f0f0f0;border:1px solid;border-color:#fff #a0a0a0 #a0a0a0 #fff"></div>
<svg style="left:1291px;top:691px" width="4" height="7"><path d="M4 0V7L0 3.5Z" fill="#aaa"/></svg>
<div style="position:absolute;left:1302px;top:686px;width:26px;height:17px;background:repeating-conic-gradient(#e8e8e8 0 25%, #f4f4f4 0 50%) 0 0/2px 2px"></div>
<div style="position:absolute;left:1328px;top:686px;width:16px;height:17px;background:#f0f0f0;border:1px solid;border-color:#fff #a0a0a0 #a0a0a0 #fff"></div>
<svg style="left:1334px;top:691px" width="4" height="7"><path d="M0 0V7L4 3.5Z" fill="#aaa"/></svg>
<div style="position:absolute;left:1345px;top:686px;width:17px;height:17px;background:#f0f0f0;border:1px solid #c8c8c8"></div>
<div class="t" style="left:3px;top:714px;font-size:12px;color:#000;">Ready</div>
<div style="position:absolute;left:1085px;top:711px;width:46px;height:18px;border:1px solid;border-color:#a0a0a0 #fff #fff #a0a0a0"></div>
<div style="position:absolute;left:1266px;top:711px;width:29px;height:18px;border:1px solid;border-color:#a0a0a0 #fff #fff #a0a0a0"></div>
<div style="position:absolute;left:1297px;top:711px;width:33px;height:18px;border:1px solid;border-color:#a0a0a0 #fff #fff #a0a0a0"></div>
<div style="position:absolute;left:1333px;top:711px;width:33px;height:18px;border:1px solid;border-color:#a0a0a0 #fff #fff #a0a0a0"></div>
<div style="position:absolute;left:1134px;top:711px;width:79px;height:18px;background:#c0c0c0;border-left:1px solid #60e060;border-top:1px solid #a0a0a0"></div>
<div class="t" style="left:1134px;top:714px;font-size:10.5px;color:#333;width:79px;text-align:center">115.30 MB</div>
<div style="position:absolute;left:1213px;top:711px;width:50px;height:18px;background:#f0f0f0;border:1px solid;border-color:#a0a0a0 #fff #fff #a0a0a0"></div>
<div class="t" style="left:1216px;top:714px;font-size:10.5px;color:#111;">DVD 5</div>
<div style="position:absolute;left:1249px;top:711px;width:1px;height:17px;background:#ccc"></div>
<svg style="left:1252px;top:717px" width="7" height="4"><path d="M0 4H7L3.5 0Z" fill="#000"/></svg>
<div class="t" style="left:1297px;top:713px;font-size:12.5px;color:#000;width:33px;text-align:center">NUM</div>
<div style="position:absolute;left:0px;top:728px;width:1366px;height:2px;background:#4a3a2a"></div>
</body></html>
